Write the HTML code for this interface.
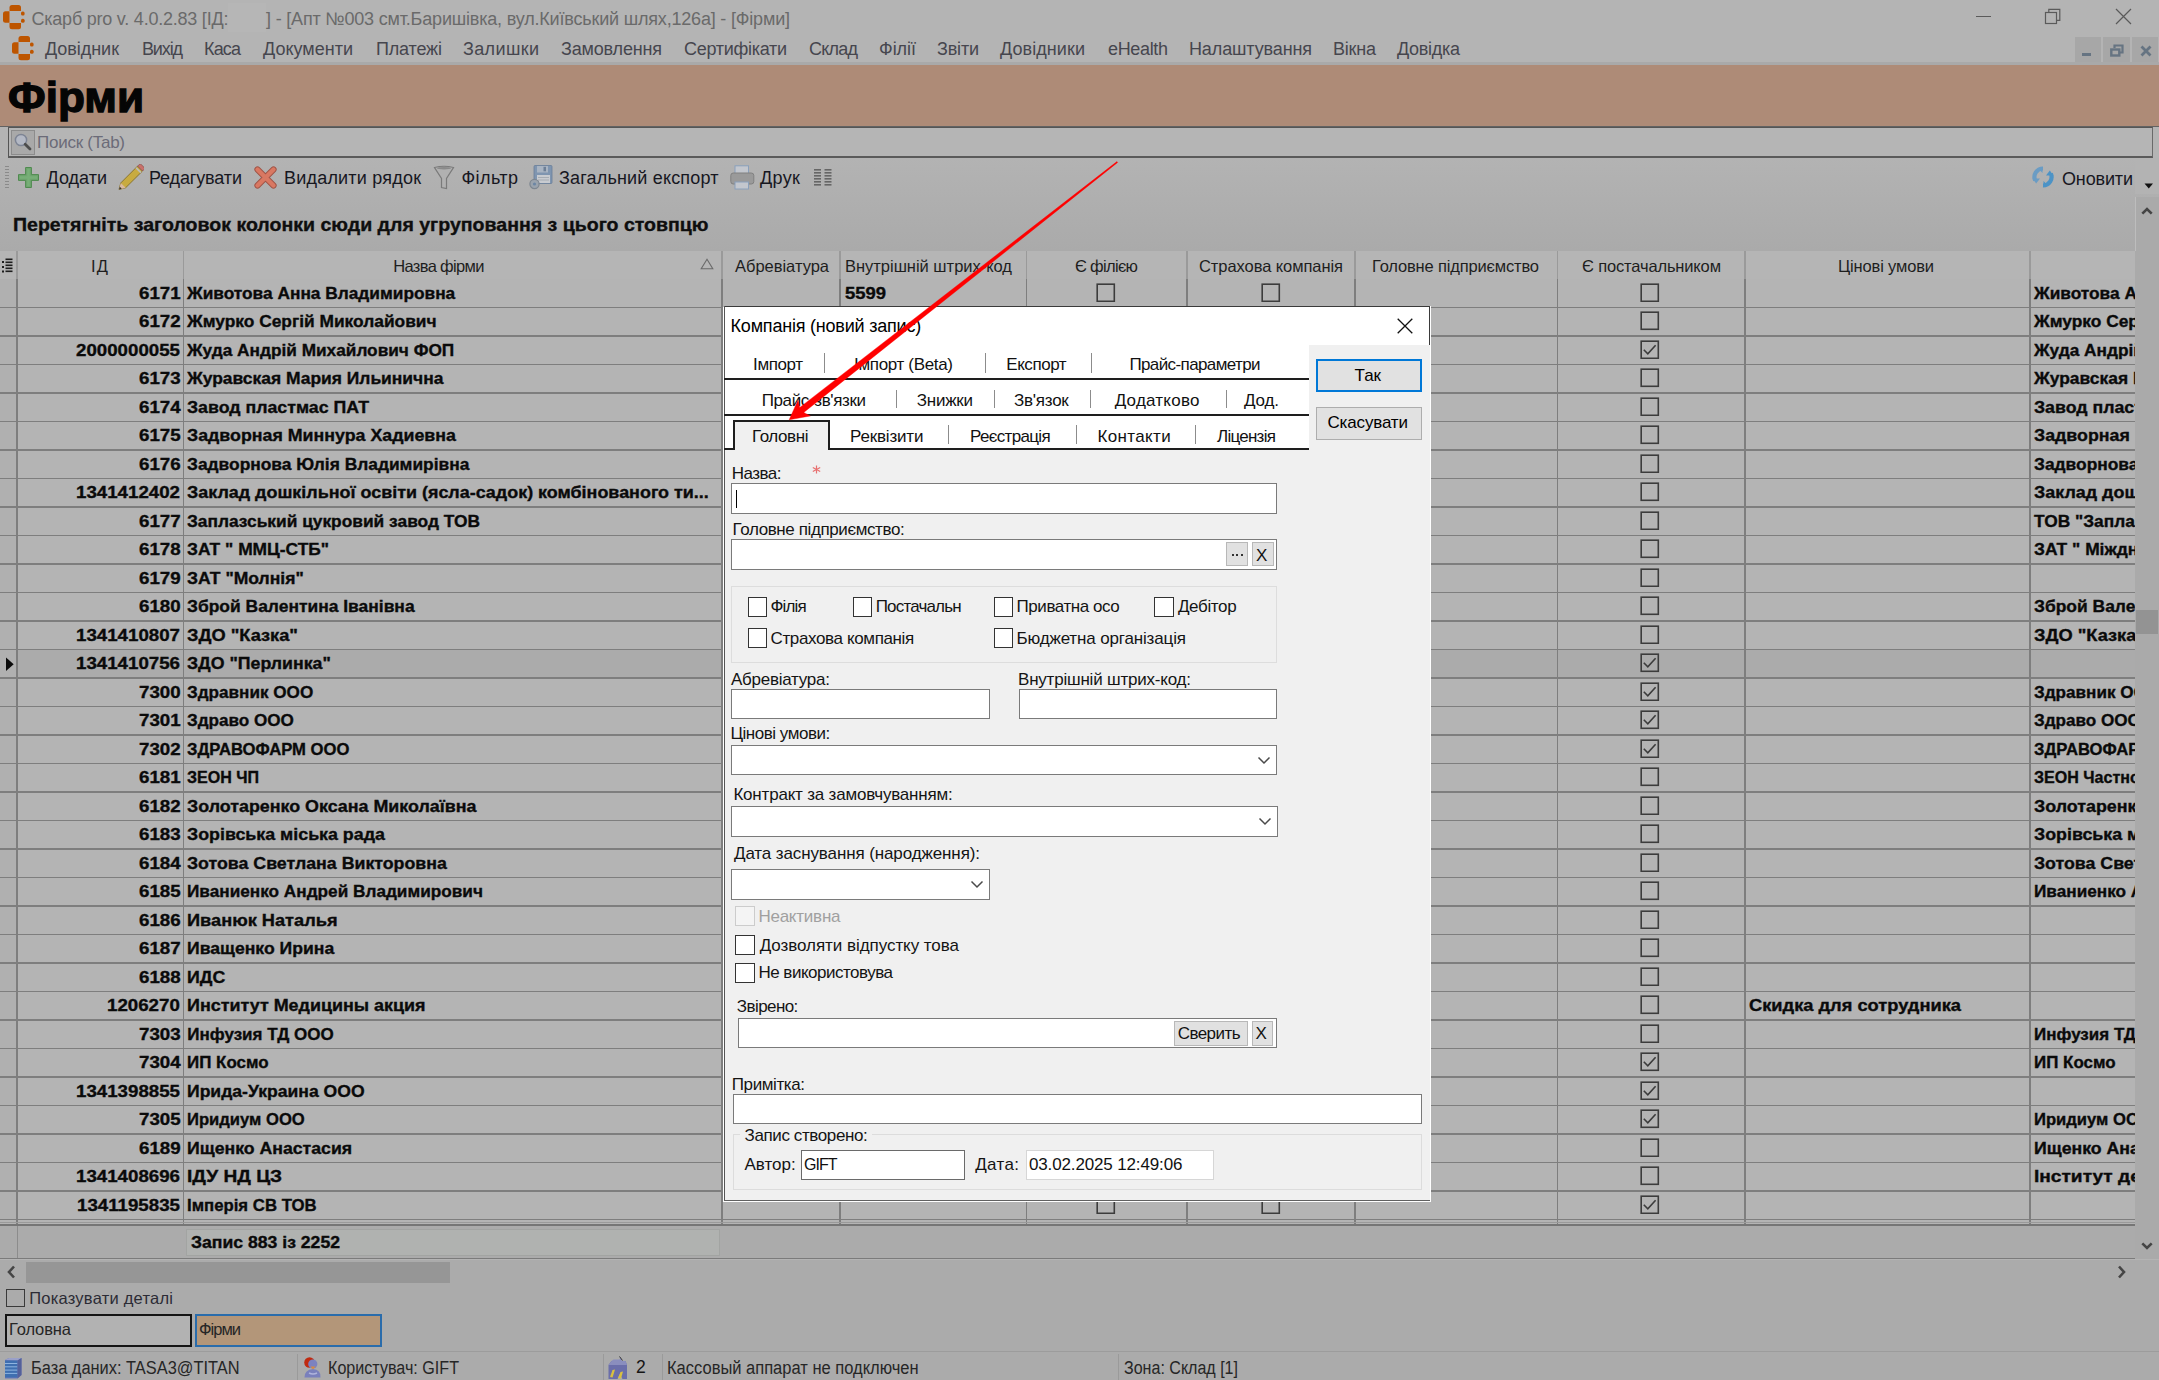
<!DOCTYPE html>
<html><head><meta charset="utf-8"><style>
html,body{margin:0;padding:0;width:2159px;height:1380px;overflow:hidden;background:#b4b4b4}
body{position:relative;font-family:"Liberation Sans",sans-serif}
.r{position:absolute}
.t{position:absolute;white-space:pre;transform-origin:0 0}
</style></head><body>
<div class="r" style="left:0.00px;top:0.00px;width:2159.00px;height:1380.00px;background:#b4b4b4"></div>
<svg class="r" style="left:3.00px;top:4.80px;" width="22" height="25" viewBox="0 0 22 25"><g fill="#bd5500"><path d="M9 0h6.5Q18 0 18 2.5V6H6.5V2.5Q6.5 0 9 0z"/><path d="M2.5 6.2H6.5v11.5H2.5Q0 17.7 0 15.2V8.7Q0 6.2 2.5 6.2z"/><path d="M6.5 18h11.5v3.7Q18 24.2 15.5 24.2H9Q6.5 24.2 6.5 21.7z"/><rect x="18" y="6.4" width="3.6" height="4.1" rx="1.6"/><rect x="18" y="13.7" width="3.6" height="4.1" rx="1.6"/></g></svg>
<div class="r" style="left:228.00px;top:3.00px;width:38.00px;height:29.00px;background:#b6b6b6"></div>
<div class="t" style="left:31.50px;top:9.76px;font-size:18px;line-height:18px;color:#6a6a6a;letter-spacing:-0.226px;">Скарб pro v. 4.0.2.83 [ІД:</div>
<div class="t" style="left:266.00px;top:9.76px;font-size:18px;line-height:18px;color:#6a6a6a;letter-spacing:-0.186px;">] - [Апт №003 смт.Баришівка, вул.Київський шлях,126а] - [Фірми]</div>
<div class="r" style="left:1976.00px;top:16.00px;width:15.00px;height:1.20px;background:#5a5a5a"></div>
<svg class="r" style="left:2044.00px;top:8.00px;" width="18" height="18" viewBox="0 0 18 18"><rect x="1.5" y="4.5" width="11" height="11" fill="none" stroke="#5a5a5a" stroke-width="1.2"/><path d="M4.8 4.5V1.3h11v11h-3.2" fill="none" stroke="#5a5a5a" stroke-width="1.2"/></svg>
<svg class="r" style="left:2115.00px;top:8.00px;" width="17" height="17" viewBox="0 0 17 17"><path d="M1 1L16 16M16 1L1 16" stroke="#5a5a5a" stroke-width="1.2"/></svg>
<svg class="r" style="left:11.70px;top:36.40px;" width="22" height="25" viewBox="0 0 22 25"><g fill="#bd5500"><path d="M9 0h6.5Q18 0 18 2.5V6H6.5V2.5Q6.5 0 9 0z"/><path d="M2.5 6.2H6.5v11.5H2.5Q0 17.7 0 15.2V8.7Q0 6.2 2.5 6.2z"/><path d="M6.5 18h11.5v3.7Q18 24.2 15.5 24.2H9Q6.5 24.2 6.5 21.7z"/><rect x="18" y="6.4" width="3.6" height="4.1" rx="1.6"/><rect x="18" y="13.7" width="3.6" height="4.1" rx="1.6"/></g></svg>
<div class="t" style="left:45.00px;top:40.26px;font-size:18px;line-height:18px;color:#46464e;letter-spacing:-0.048px;">Довідник</div>
<div class="t" style="left:142.00px;top:40.26px;font-size:18px;line-height:18px;color:#46464e;letter-spacing:-1.141px;">Вихід</div>
<div class="t" style="left:204.00px;top:40.26px;font-size:18px;line-height:18px;color:#46464e;letter-spacing:-0.836px;">Каса</div>
<div class="t" style="left:263.00px;top:40.26px;font-size:18px;line-height:18px;color:#46464e;letter-spacing:0.012px;">Документи</div>
<div class="t" style="left:376.00px;top:40.26px;font-size:18px;line-height:18px;color:#46464e;letter-spacing:-0.158px;">Платежі</div>
<div class="t" style="left:463.00px;top:40.26px;font-size:18px;line-height:18px;color:#46464e;letter-spacing:0.365px;">Залишки</div>
<div class="t" style="left:561.00px;top:40.26px;font-size:18px;line-height:18px;color:#46464e;letter-spacing:-0.173px;">Замовлення</div>
<div class="t" style="left:684.00px;top:40.26px;font-size:18px;line-height:18px;color:#46464e;letter-spacing:-0.292px;">Сертифікати</div>
<div class="t" style="left:809.00px;top:40.26px;font-size:18px;line-height:18px;color:#46464e;letter-spacing:-0.773px;">Склад</div>
<div class="t" style="left:879.00px;top:40.26px;font-size:18px;line-height:18px;color:#46464e;letter-spacing:-0.046px;">Філії</div>
<div class="t" style="left:937.00px;top:40.26px;font-size:18px;line-height:18px;color:#46464e;letter-spacing:-0.183px;">Звіти</div>
<div class="t" style="left:1000.00px;top:40.26px;font-size:18px;line-height:18px;color:#46464e;letter-spacing:0.076px;">Довідники</div>
<div class="t" style="left:1108.00px;top:40.26px;font-size:18px;line-height:18px;color:#46464e;letter-spacing:-0.340px;">eHealth</div>
<div class="t" style="left:1189.00px;top:40.26px;font-size:18px;line-height:18px;color:#46464e;letter-spacing:-0.128px;">Налаштування</div>
<div class="t" style="left:1333.00px;top:40.26px;font-size:18px;line-height:18px;color:#46464e;letter-spacing:-0.208px;">Вікна</div>
<div class="t" style="left:1397.00px;top:40.26px;font-size:18px;line-height:18px;color:#46464e;letter-spacing:-0.291px;">Довідка</div>
<div class="r" style="left:2074.60px;top:36.70px;width:26.40px;height:26.70px;background:#a7a7a7"></div>
<div class="r" style="left:2103.00px;top:36.70px;width:27.00px;height:26.70px;background:#a7a7a7"></div>
<div class="r" style="left:2132.00px;top:36.70px;width:26.00px;height:26.70px;background:#a7a7a7"></div>
<div class="r" style="left:2082.00px;top:52.70px;width:9.00px;height:3.20px;background:#667482"></div>
<svg class="r" style="left:2110.00px;top:43.50px;" width="14" height="14" viewBox="0 0 14 14"><rect x="1.3" y="5.5" width="8" height="6" fill="none" stroke="#667482" stroke-width="2.4"/><path d="M4.5 4V1.5h8v7h-2.5" fill="none" stroke="#667482" stroke-width="2.2"/></svg>
<svg class="r" style="left:2139.50px;top:45.00px;" width="12" height="12" viewBox="0 0 12 12"><path d="M1.5 1.5L10.5 10.5M10.5 1.5L1.5 10.5" stroke="#667482" stroke-width="2.8"/></svg>
<div class="r" style="left:0.00px;top:61.80px;width:2159.00px;height:2.80px;background:#a9a9a9"></div>
<div class="r" style="left:0.00px;top:64.50px;width:2159.00px;height:62.00px;background:#ae8b77"></div>
<div class="r" style="left:0.00px;top:125.80px;width:2159.00px;height:1.60px;background:#626262"></div>
<div class="t" style="left:8.30px;top:76.40px;font-size:43px;line-height:43px;color:#050505;font-weight:bold;-webkit-text-stroke:0.35px #050505;transform:scaleX(1.0265);-webkit-text-stroke:1.3px #050505;">Фірми</div>
<div class="r" style="left:7.50px;top:127.40px;width:2145.00px;height:30.60px;background:#b5b5b5;border-style:solid;border-width:1.5px 1.5px 2px 1.5px;border-color:#555 #6a6a6a #5a5a5a #555;box-sizing:border-box"></div>
<div class="r" style="left:11.00px;top:130.00px;width:23.50px;height:24.50px;background:#a9a9a9;border:1px solid #8c8c8c;box-sizing:border-box"></div>
<svg class="r" style="left:13.00px;top:132.00px;" width="20" height="20" viewBox="0 0 20 20"><circle cx="8" cy="8" r="5.6" fill="#b3b8c4" stroke="#7d8494" stroke-width="1.5"/><path d="M12.2 12.2L17 17" stroke="#4d4d4d" stroke-width="2.8" stroke-linecap="round"/></svg>
<div class="t" style="left:37.00px;top:134.11px;font-size:17px;line-height:17px;color:#6b6b78;letter-spacing:-0.256px;">Поиск (Tab)</div>
<div class="r" style="left:0.00px;top:158.00px;width:2159.00px;height:93.00px;background:linear-gradient(#b3b3b3,#aaaaaa)"></div>
<div class="r" style="left:4.80px;top:165.50px;width:4.20px;height:1.30px;background:#8a8a8a"></div>
<div class="r" style="left:4.80px;top:168.50px;width:4.20px;height:1.30px;background:#8a8a8a"></div>
<div class="r" style="left:4.80px;top:171.50px;width:4.20px;height:1.30px;background:#8a8a8a"></div>
<div class="r" style="left:4.80px;top:174.50px;width:4.20px;height:1.30px;background:#8a8a8a"></div>
<div class="r" style="left:4.80px;top:177.50px;width:4.20px;height:1.30px;background:#8a8a8a"></div>
<div class="r" style="left:4.80px;top:180.50px;width:4.20px;height:1.30px;background:#8a8a8a"></div>
<div class="r" style="left:4.80px;top:183.50px;width:4.20px;height:1.30px;background:#8a8a8a"></div>
<div class="r" style="left:4.80px;top:186.50px;width:4.20px;height:1.30px;background:#8a8a8a"></div>
<svg class="r" style="left:18.00px;top:167.00px;" width="21" height="21" viewBox="0 0 21 21"><path d="M7.6 0.5h5.8v7.1h7.1v5.8h-7.1v7.1H7.6v-7.1H0.5V7.6h7.1z" fill="#6fa56f" stroke="#4f8a4f" stroke-width="1"/><path d="M9.3 2h2.4v7.3H19v2.4h-7.3V19H9.3v-7.3H2V9.3h7.3z" fill="#7db57d" opacity="0.6"/></svg>
<div class="t" style="left:46.50px;top:169.46px;font-size:18px;line-height:18px;color:#17171f;letter-spacing:0.015px;">Додати</div>
<svg class="r" style="left:117.00px;top:164.00px;" width="27" height="27" viewBox="0 0 27 27"><path d="M2 25.5l1.8-6.6L20.6 2.1l4.9 4.9L8.7 23.7z" fill="#c8ab40" stroke="#8a7530" stroke-width="1"/><path d="M20.6 2.1l1.6-1.6q1-1 2 0l2.9 2.9q1 1 0 2l-1.6 1.6z" fill="#c9706a" stroke="#8a5550" stroke-width="0.8"/><path d="M19 3.7l4.9 4.9" stroke="#bdbdbd" stroke-width="1.6"/><path d="M2 25.5l1.8-6.6 4.9 4.8z" fill="#d8b8a0"/><path d="M2 25.5l0.8-2.8 2 2z" fill="#333"/></svg>
<div class="t" style="left:149.00px;top:169.26px;font-size:18px;line-height:18px;color:#17171f;letter-spacing:-0.132px;">Редагувати</div>
<svg class="r" style="left:254.00px;top:166.00px;" width="23" height="23" viewBox="0 0 23 23"><path d="M3.5 3.5L19.5 19.5M19.5 3.5L3.5 19.5" stroke="#9f5346" stroke-width="6.2" stroke-linecap="round"/><path d="M3.5 3.5L19.5 19.5M19.5 3.5L3.5 19.5" stroke="#d97862" stroke-width="4.4" stroke-linecap="round"/></svg>
<div class="t" style="left:284.00px;top:169.26px;font-size:18px;line-height:18px;color:#17171f;letter-spacing:0.202px;">Видалити рядок</div>
<svg class="r" style="left:433.00px;top:165.00px;" width="22" height="25" viewBox="0 0 22 25"><path d="M1.5 2.5Q11 0 20.5 2.5L13.5 13.5V23.5L8.5 22.5V13.5Z" fill="#b1b1b1" stroke="#7a7a7a" stroke-width="1.2"/><ellipse cx="11" cy="3.2" rx="7" ry="1.3" fill="#8a8a8a"/></svg>
<div class="t" style="left:461.50px;top:169.26px;font-size:18px;line-height:18px;color:#17171f;letter-spacing:0.417px;">Фільтр</div>
<svg class="r" style="left:528.00px;top:164.00px;" width="26" height="27" viewBox="0 0 26 27"><rect x="6" y="1.5" width="18" height="18" rx="1" fill="#7f95b0" stroke="#6a7f99" stroke-width="0.8"/><rect x="9" y="2" width="11" height="6.5" fill="#a9b4c2"/><rect x="15.5" y="2.8" width="2.5" height="4.5" fill="#6d7f96"/><rect x="9" y="11" width="13" height="8" fill="#c8cbd0"/><path d="M10 13.5h11M10 16h11" stroke="#9da3ab" stroke-width="0.8"/><circle cx="6.5" cy="20" r="4.6" fill="#9aa3ad" stroke="#7d8690" stroke-width="1.2"/><circle cx="6.5" cy="20" r="1.6" fill="#6c86a4"/></svg>
<div class="t" style="left:559.00px;top:169.26px;font-size:18px;line-height:18px;color:#17171f;letter-spacing:0.175px;">Загальний експорт</div>
<svg class="r" style="left:730.00px;top:165.00px;" width="25" height="25" viewBox="0 0 25 25"><rect x="5" y="0.8" width="13.5" height="9" fill="#c3c7ce" stroke="#8aa0bb" stroke-width="1"/><rect x="0.8" y="8" width="23" height="11" rx="2.5" fill="#9a9a9a" stroke="#808080" stroke-width="1"/><rect x="5" y="17" width="13.5" height="7" fill="#c3c7ce" stroke="#8aa0bb" stroke-width="1"/></svg>
<div class="t" style="left:760.00px;top:169.26px;font-size:18px;line-height:18px;color:#17171f;letter-spacing:0.375px;">Друк</div>
<svg class="r" style="left:814.00px;top:169.00px;" width="19" height="17" viewBox="0 0 19 17"><g fill="#666"><rect x="0" y="0" width="7" height="1.6"/><rect x="0" y="3" width="7" height="1.6"/><rect x="0" y="6" width="7" height="1.6"/><rect x="0" y="9" width="7" height="1.6"/><rect x="0" y="12" width="7" height="1.6"/><rect x="0" y="15" width="7" height="1.6"/><rect x="10.5" y="0" width="7" height="1.6"/><rect x="10.5" y="3" width="7" height="1.6"/><rect x="10.5" y="6" width="7" height="1.6"/><rect x="10.5" y="9" width="7" height="1.6"/><rect x="10.5" y="12" width="7" height="1.6"/><rect x="10.5" y="15" width="7" height="1.6"/></g></svg>
<svg class="r" style="left:2032.00px;top:166.00px;" width="22" height="22" viewBox="0 0 22 22"><path d="M11 2.5A8.5 8.5 0 0 0 3.2 14.5" fill="none" stroke="#6a9cc4" stroke-width="4.2"/><path d="M0.5 12.5h7.5l-3.8 5z" fill="#6a9cc4"/><path d="M11 19.5A8.5 8.5 0 0 0 18.8 7.5" fill="none" stroke="#4c93c6" stroke-width="4.2"/><path d="M21.5 9.5h-7.5l3.8-5z" fill="#4c93c6"/><path d="M10.5 1v6l-3-3z" fill="#6a9cc4"/><path d="M11.5 21v-6l3 3z" fill="#4c93c6"/></svg>
<div class="t" style="left:2062.00px;top:169.56px;font-size:18px;line-height:18px;color:#17171f;letter-spacing:-0.145px;">Оновити</div>
<svg class="r" style="left:2144.00px;top:182.50px;" width="9.5" height="6" viewBox="0 0 9.5 6"><path d="M0.5 0.5h8.5L4.75 5.5z" fill="#111"/></svg>
<div class="t" style="left:12.50px;top:215.64px;font-size:18.5px;line-height:18.5px;color:#0e0e0e;font-weight:bold;-webkit-text-stroke:0.35px #0e0e0e;transform:scaleX(1.0560);">Перетягніть заголовок колонки сюди для угруповання з цього стовпцю</div>
<div class="r" style="left:0.00px;top:251.00px;width:2135.00px;height:28.00px;background:#b5b5b5"></div>
<div class="r" style="left:16.40px;top:251.00px;width:1.20px;height:28.00px;background:#9a9a9a"></div>
<div class="r" style="left:182.90px;top:251.00px;width:1.20px;height:28.00px;background:#9a9a9a"></div>
<div class="r" style="left:721.40px;top:251.00px;width:1.20px;height:28.00px;background:#9a9a9a"></div>
<div class="r" style="left:839.40px;top:251.00px;width:1.20px;height:28.00px;background:#9a9a9a"></div>
<div class="r" style="left:1025.90px;top:251.00px;width:1.20px;height:28.00px;background:#9a9a9a"></div>
<div class="r" style="left:1186.40px;top:251.00px;width:1.20px;height:28.00px;background:#9a9a9a"></div>
<div class="r" style="left:1354.40px;top:251.00px;width:1.20px;height:28.00px;background:#9a9a9a"></div>
<div class="r" style="left:1556.90px;top:251.00px;width:1.20px;height:28.00px;background:#9a9a9a"></div>
<div class="r" style="left:1744.40px;top:251.00px;width:1.20px;height:28.00px;background:#9a9a9a"></div>
<div class="r" style="left:2029.40px;top:251.00px;width:1.20px;height:28.00px;background:#9a9a9a"></div>
<svg class="r" style="left:1.50px;top:258.00px;" width="12" height="15" viewBox="0 0 12 15"><g fill="#1e1e1e"><rect x="0" y="3" width="2" height="2"/><rect x="0" y="8" width="2" height="2"/><rect x="0" y="12.5" width="2" height="2"/><rect x="3.5" y="0.5" width="7" height="1.6"/><rect x="3.5" y="3.5" width="7" height="1.6"/><rect x="3.5" y="6.5" width="7" height="1.6"/><rect x="3.5" y="9.5" width="7" height="1.6"/><rect x="3.5" y="12.5" width="7" height="1.6"/></g></svg>
<div class="t" style="left:91.00px;top:257.73px;font-size:16.5px;line-height:16.5px;color:#1e1e1e;letter-spacing:1.241px;">ІД</div>
<div class="t" style="left:393.30px;top:257.73px;font-size:16.5px;line-height:16.5px;color:#1e1e1e;letter-spacing:-0.669px;">Назва фірми</div>
<div class="t" style="left:735.00px;top:257.73px;font-size:16.5px;line-height:16.5px;color:#1e1e1e;letter-spacing:-0.021px;">Абревіатура</div>
<div class="t" style="left:845.00px;top:257.73px;font-size:16.5px;line-height:16.5px;color:#1e1e1e;letter-spacing:-0.019px;">Внутрішній штрих-код</div>
<div class="t" style="left:1075.00px;top:257.73px;font-size:16.5px;line-height:16.5px;color:#1e1e1e;letter-spacing:-0.682px;">Є філією</div>
<div class="t" style="left:1199.00px;top:257.73px;font-size:16.5px;line-height:16.5px;color:#1e1e1e;letter-spacing:-0.072px;">Страхова компанія</div>
<div class="t" style="left:1372.00px;top:257.73px;font-size:16.5px;line-height:16.5px;color:#1e1e1e;letter-spacing:-0.166px;">Головне підприємство</div>
<div class="t" style="left:1582.00px;top:257.73px;font-size:16.5px;line-height:16.5px;color:#1e1e1e;letter-spacing:-0.150px;">Є постачальником</div>
<div class="t" style="left:1838.00px;top:257.73px;font-size:16.5px;line-height:16.5px;color:#1e1e1e;letter-spacing:-0.159px;">Цінові умови</div>
<svg class="r" style="left:700.00px;top:258.00px;" width="14" height="12" viewBox="0 0 14 12"><path d="M7 1.2L12.8 10.8H1.2z" fill="none" stroke="#6a6a6a" stroke-width="1.1"/></svg>
<div class="r" style="left:0.00px;top:279.00px;width:2135.00px;height:943.50px;background:#b4b4b4"></div>
<div class="r" style="left:0.00px;top:279.00px;width:16.50px;height:943.50px;background:#b0b0b0"></div>
<div class="r" style="left:17.00px;top:649.50px;width:2118.00px;height:28.50px;background:#ababab"></div>
<div class="r" style="left:0.00px;top:306.85px;width:2135.00px;height:1.30px;background:#7e7e7e"></div>
<div class="r" style="left:0.00px;top:335.35px;width:2135.00px;height:1.30px;background:#7e7e7e"></div>
<div class="r" style="left:0.00px;top:363.85px;width:2135.00px;height:1.30px;background:#7e7e7e"></div>
<div class="r" style="left:0.00px;top:392.35px;width:2135.00px;height:1.30px;background:#7e7e7e"></div>
<div class="r" style="left:0.00px;top:420.85px;width:2135.00px;height:1.30px;background:#7e7e7e"></div>
<div class="r" style="left:0.00px;top:449.35px;width:2135.00px;height:1.30px;background:#7e7e7e"></div>
<div class="r" style="left:0.00px;top:477.85px;width:2135.00px;height:1.30px;background:#7e7e7e"></div>
<div class="r" style="left:0.00px;top:506.35px;width:2135.00px;height:1.30px;background:#7e7e7e"></div>
<div class="r" style="left:0.00px;top:534.85px;width:2135.00px;height:1.30px;background:#7e7e7e"></div>
<div class="r" style="left:0.00px;top:563.35px;width:2135.00px;height:1.30px;background:#7e7e7e"></div>
<div class="r" style="left:0.00px;top:591.85px;width:2135.00px;height:1.30px;background:#7e7e7e"></div>
<div class="r" style="left:0.00px;top:620.35px;width:2135.00px;height:1.30px;background:#7e7e7e"></div>
<div class="r" style="left:0.00px;top:648.85px;width:2135.00px;height:1.30px;background:#7e7e7e"></div>
<div class="r" style="left:0.00px;top:677.35px;width:2135.00px;height:1.30px;background:#7e7e7e"></div>
<div class="r" style="left:0.00px;top:705.85px;width:2135.00px;height:1.30px;background:#7e7e7e"></div>
<div class="r" style="left:0.00px;top:734.35px;width:2135.00px;height:1.30px;background:#7e7e7e"></div>
<div class="r" style="left:0.00px;top:762.85px;width:2135.00px;height:1.30px;background:#7e7e7e"></div>
<div class="r" style="left:0.00px;top:791.35px;width:2135.00px;height:1.30px;background:#7e7e7e"></div>
<div class="r" style="left:0.00px;top:819.85px;width:2135.00px;height:1.30px;background:#7e7e7e"></div>
<div class="r" style="left:0.00px;top:848.35px;width:2135.00px;height:1.30px;background:#7e7e7e"></div>
<div class="r" style="left:0.00px;top:876.85px;width:2135.00px;height:1.30px;background:#7e7e7e"></div>
<div class="r" style="left:0.00px;top:905.35px;width:2135.00px;height:1.30px;background:#7e7e7e"></div>
<div class="r" style="left:0.00px;top:933.85px;width:2135.00px;height:1.30px;background:#7e7e7e"></div>
<div class="r" style="left:0.00px;top:962.35px;width:2135.00px;height:1.30px;background:#7e7e7e"></div>
<div class="r" style="left:0.00px;top:990.85px;width:2135.00px;height:1.30px;background:#7e7e7e"></div>
<div class="r" style="left:0.00px;top:1019.35px;width:2135.00px;height:1.30px;background:#7e7e7e"></div>
<div class="r" style="left:0.00px;top:1047.85px;width:2135.00px;height:1.30px;background:#7e7e7e"></div>
<div class="r" style="left:0.00px;top:1076.35px;width:2135.00px;height:1.30px;background:#7e7e7e"></div>
<div class="r" style="left:0.00px;top:1104.85px;width:2135.00px;height:1.30px;background:#7e7e7e"></div>
<div class="r" style="left:0.00px;top:1133.35px;width:2135.00px;height:1.30px;background:#7e7e7e"></div>
<div class="r" style="left:0.00px;top:1161.85px;width:2135.00px;height:1.30px;background:#7e7e7e"></div>
<div class="r" style="left:0.00px;top:1190.35px;width:2135.00px;height:1.30px;background:#7e7e7e"></div>
<div class="r" style="left:0.00px;top:1218.85px;width:2135.00px;height:1.30px;background:#7e7e7e"></div>
<div class="r" style="left:16.35px;top:279.00px;width:1.30px;height:943.50px;background:#7e7e7e"></div>
<div class="r" style="left:182.85px;top:279.00px;width:1.30px;height:943.50px;background:#7e7e7e"></div>
<div class="r" style="left:721.35px;top:279.00px;width:1.30px;height:943.50px;background:#7e7e7e"></div>
<div class="r" style="left:839.35px;top:279.00px;width:1.30px;height:943.50px;background:#7e7e7e"></div>
<div class="r" style="left:1025.85px;top:279.00px;width:1.30px;height:943.50px;background:#7e7e7e"></div>
<div class="r" style="left:1186.35px;top:279.00px;width:1.30px;height:943.50px;background:#7e7e7e"></div>
<div class="r" style="left:1354.35px;top:279.00px;width:1.30px;height:943.50px;background:#7e7e7e"></div>
<div class="r" style="left:1556.85px;top:279.00px;width:1.30px;height:943.50px;background:#7e7e7e"></div>
<div class="r" style="left:1744.35px;top:279.00px;width:1.30px;height:943.50px;background:#7e7e7e"></div>
<div class="r" style="left:2029.35px;top:279.00px;width:1.30px;height:943.50px;background:#7e7e7e"></div>
<svg class="r" style="left:5.00px;top:656.00px;" width="10" height="16" viewBox="0 0 10 16"><path d="M1 1.5l7.7 6.8L1 15z" fill="#0a0a0a"/></svg>
<div class="t" style="left:138.60px;top:284.61px;font-size:17px;line-height:17px;color:#0a0a0a;font-weight:bold;-webkit-text-stroke:0.35px #0a0a0a;transform:scaleX(1.1000);">6171</div>
<div class="t" style="left:187.30px;top:284.61px;font-size:17px;line-height:17px;color:#0a0a0a;font-weight:bold;-webkit-text-stroke:0.35px #0a0a0a;transform:scaleX(1.0174);">Животова Анна Владимировна</div>
<svg class="r" style="left:1096.25px;top:282.55px;" width="19.5" height="19.5" viewBox="0 0 19.5 19.5"><rect x="1.2" y="1.2" width="17.1" height="17.1" fill="none" stroke="#3c3c3c" stroke-width="1.6"/></svg>
<svg class="r" style="left:1261.25px;top:282.55px;" width="19.5" height="19.5" viewBox="0 0 19.5 19.5"><rect x="1.2" y="1.2" width="17.1" height="17.1" fill="none" stroke="#3c3c3c" stroke-width="1.6"/></svg>
<svg class="r" style="left:1640.25px;top:282.55px;" width="19.5" height="19.5" viewBox="0 0 19.5 19.5"><rect x="1.2" y="1.2" width="17.1" height="17.1" fill="none" stroke="#3c3c3c" stroke-width="1.6"/></svg>
<div class="t" style="left:2034.00px;top:284.61px;font-size:17px;line-height:17px;color:#0a0a0a;font-weight:bold;-webkit-text-stroke:0.35px #0a0a0a;transform:scaleX(1.0174);">Животова Анна</div>
<div class="t" style="left:845.00px;top:284.61px;font-size:17px;line-height:17px;color:#0a0a0a;font-weight:bold;-webkit-text-stroke:0.35px #0a0a0a;transform:scaleX(1.0841);">5599</div>
<div class="t" style="left:138.60px;top:313.11px;font-size:17px;line-height:17px;color:#0a0a0a;font-weight:bold;-webkit-text-stroke:0.35px #0a0a0a;transform:scaleX(1.1000);">6172</div>
<div class="t" style="left:187.30px;top:313.11px;font-size:17px;line-height:17px;color:#0a0a0a;font-weight:bold;-webkit-text-stroke:0.35px #0a0a0a;transform:scaleX(1.0207);">Жмурко Сергій Миколайович</div>
<svg class="r" style="left:1096.25px;top:311.05px;" width="19.5" height="19.5" viewBox="0 0 19.5 19.5"><rect x="1.2" y="1.2" width="17.1" height="17.1" fill="none" stroke="#3c3c3c" stroke-width="1.6"/></svg>
<svg class="r" style="left:1261.25px;top:311.05px;" width="19.5" height="19.5" viewBox="0 0 19.5 19.5"><rect x="1.2" y="1.2" width="17.1" height="17.1" fill="none" stroke="#3c3c3c" stroke-width="1.6"/></svg>
<svg class="r" style="left:1640.25px;top:311.05px;" width="19.5" height="19.5" viewBox="0 0 19.5 19.5"><rect x="1.2" y="1.2" width="17.1" height="17.1" fill="none" stroke="#3c3c3c" stroke-width="1.6"/></svg>
<div class="t" style="left:2034.00px;top:313.11px;font-size:17px;line-height:17px;color:#0a0a0a;font-weight:bold;-webkit-text-stroke:0.35px #0a0a0a;transform:scaleX(1.0207);">Жмурко Сергій</div>
<div class="t" style="left:76.20px;top:341.61px;font-size:17px;line-height:17px;color:#0a0a0a;font-weight:bold;-webkit-text-stroke:0.35px #0a0a0a;transform:scaleX(1.1000);">2000000055</div>
<div class="t" style="left:187.30px;top:341.61px;font-size:17px;line-height:17px;color:#0a0a0a;font-weight:bold;-webkit-text-stroke:0.35px #0a0a0a;transform:scaleX(1.0146);">Жуда Андрій Михайлович ФОП</div>
<svg class="r" style="left:1096.25px;top:339.55px;" width="19.5" height="19.5" viewBox="0 0 19.5 19.5"><rect x="1.2" y="1.2" width="17.1" height="17.1" fill="none" stroke="#3c3c3c" stroke-width="1.6"/></svg>
<svg class="r" style="left:1261.25px;top:339.55px;" width="19.5" height="19.5" viewBox="0 0 19.5 19.5"><rect x="1.2" y="1.2" width="17.1" height="17.1" fill="none" stroke="#3c3c3c" stroke-width="1.6"/></svg>
<svg class="r" style="left:1640.25px;top:339.55px;" width="19.5" height="19.5" viewBox="0 0 19.5 19.5"><rect x="1.2" y="1.2" width="17.1" height="17.1" fill="none" stroke="#3c3c3c" stroke-width="1.6"/><path d="M3.8 9.8l4 4 7.8-8.6" fill="none" stroke="#3c3c3c" stroke-width="1.6"/></svg>
<div class="t" style="left:2034.00px;top:341.61px;font-size:17px;line-height:17px;color:#0a0a0a;font-weight:bold;-webkit-text-stroke:0.35px #0a0a0a;transform:scaleX(1.0146);">Жуда Андрій</div>
<div class="t" style="left:138.60px;top:370.11px;font-size:17px;line-height:17px;color:#0a0a0a;font-weight:bold;-webkit-text-stroke:0.35px #0a0a0a;transform:scaleX(1.1000);">6173</div>
<div class="t" style="left:187.30px;top:370.11px;font-size:17px;line-height:17px;color:#0a0a0a;font-weight:bold;-webkit-text-stroke:0.35px #0a0a0a;transform:scaleX(1.0254);">Журавская Мария Ильинична</div>
<svg class="r" style="left:1096.25px;top:368.05px;" width="19.5" height="19.5" viewBox="0 0 19.5 19.5"><rect x="1.2" y="1.2" width="17.1" height="17.1" fill="none" stroke="#3c3c3c" stroke-width="1.6"/></svg>
<svg class="r" style="left:1261.25px;top:368.05px;" width="19.5" height="19.5" viewBox="0 0 19.5 19.5"><rect x="1.2" y="1.2" width="17.1" height="17.1" fill="none" stroke="#3c3c3c" stroke-width="1.6"/></svg>
<svg class="r" style="left:1640.25px;top:368.05px;" width="19.5" height="19.5" viewBox="0 0 19.5 19.5"><rect x="1.2" y="1.2" width="17.1" height="17.1" fill="none" stroke="#3c3c3c" stroke-width="1.6"/></svg>
<div class="t" style="left:2034.00px;top:370.11px;font-size:17px;line-height:17px;color:#0a0a0a;font-weight:bold;-webkit-text-stroke:0.35px #0a0a0a;transform:scaleX(1.0254);">Журавская Мария</div>
<div class="t" style="left:138.60px;top:398.61px;font-size:17px;line-height:17px;color:#0a0a0a;font-weight:bold;-webkit-text-stroke:0.35px #0a0a0a;transform:scaleX(1.1000);">6174</div>
<div class="t" style="left:187.30px;top:398.61px;font-size:17px;line-height:17px;color:#0a0a0a;font-weight:bold;-webkit-text-stroke:0.35px #0a0a0a;transform:scaleX(1.0440);">Завод пластмас ПАТ</div>
<svg class="r" style="left:1096.25px;top:396.55px;" width="19.5" height="19.5" viewBox="0 0 19.5 19.5"><rect x="1.2" y="1.2" width="17.1" height="17.1" fill="none" stroke="#3c3c3c" stroke-width="1.6"/></svg>
<svg class="r" style="left:1261.25px;top:396.55px;" width="19.5" height="19.5" viewBox="0 0 19.5 19.5"><rect x="1.2" y="1.2" width="17.1" height="17.1" fill="none" stroke="#3c3c3c" stroke-width="1.6"/></svg>
<svg class="r" style="left:1640.25px;top:396.55px;" width="19.5" height="19.5" viewBox="0 0 19.5 19.5"><rect x="1.2" y="1.2" width="17.1" height="17.1" fill="none" stroke="#3c3c3c" stroke-width="1.6"/></svg>
<div class="t" style="left:2034.00px;top:398.61px;font-size:17px;line-height:17px;color:#0a0a0a;font-weight:bold;-webkit-text-stroke:0.35px #0a0a0a;transform:scaleX(1.0440);">Завод пластмас</div>
<div class="t" style="left:138.60px;top:427.11px;font-size:17px;line-height:17px;color:#0a0a0a;font-weight:bold;-webkit-text-stroke:0.35px #0a0a0a;transform:scaleX(1.1000);">6175</div>
<div class="t" style="left:187.30px;top:427.11px;font-size:17px;line-height:17px;color:#0a0a0a;font-weight:bold;-webkit-text-stroke:0.35px #0a0a0a;transform:scaleX(1.0469);">Задворная Миннура Хадиевна</div>
<svg class="r" style="left:1096.25px;top:425.05px;" width="19.5" height="19.5" viewBox="0 0 19.5 19.5"><rect x="1.2" y="1.2" width="17.1" height="17.1" fill="none" stroke="#3c3c3c" stroke-width="1.6"/></svg>
<svg class="r" style="left:1261.25px;top:425.05px;" width="19.5" height="19.5" viewBox="0 0 19.5 19.5"><rect x="1.2" y="1.2" width="17.1" height="17.1" fill="none" stroke="#3c3c3c" stroke-width="1.6"/></svg>
<svg class="r" style="left:1640.25px;top:425.05px;" width="19.5" height="19.5" viewBox="0 0 19.5 19.5"><rect x="1.2" y="1.2" width="17.1" height="17.1" fill="none" stroke="#3c3c3c" stroke-width="1.6"/></svg>
<div class="t" style="left:2034.00px;top:427.11px;font-size:17px;line-height:17px;color:#0a0a0a;font-weight:bold;-webkit-text-stroke:0.35px #0a0a0a;transform:scaleX(1.0469);">Задворная Миннура</div>
<div class="t" style="left:138.60px;top:455.61px;font-size:17px;line-height:17px;color:#0a0a0a;font-weight:bold;-webkit-text-stroke:0.35px #0a0a0a;transform:scaleX(1.1000);">6176</div>
<div class="t" style="left:187.30px;top:455.61px;font-size:17px;line-height:17px;color:#0a0a0a;font-weight:bold;-webkit-text-stroke:0.35px #0a0a0a;transform:scaleX(1.0221);">Задворнова Юлія Владимирівна</div>
<svg class="r" style="left:1096.25px;top:453.55px;" width="19.5" height="19.5" viewBox="0 0 19.5 19.5"><rect x="1.2" y="1.2" width="17.1" height="17.1" fill="none" stroke="#3c3c3c" stroke-width="1.6"/></svg>
<svg class="r" style="left:1261.25px;top:453.55px;" width="19.5" height="19.5" viewBox="0 0 19.5 19.5"><rect x="1.2" y="1.2" width="17.1" height="17.1" fill="none" stroke="#3c3c3c" stroke-width="1.6"/></svg>
<svg class="r" style="left:1640.25px;top:453.55px;" width="19.5" height="19.5" viewBox="0 0 19.5 19.5"><rect x="1.2" y="1.2" width="17.1" height="17.1" fill="none" stroke="#3c3c3c" stroke-width="1.6"/></svg>
<div class="t" style="left:2034.00px;top:455.61px;font-size:17px;line-height:17px;color:#0a0a0a;font-weight:bold;-webkit-text-stroke:0.35px #0a0a0a;transform:scaleX(1.0221);">Задворнова Юлія</div>
<div class="t" style="left:76.20px;top:484.11px;font-size:17px;line-height:17px;color:#0a0a0a;font-weight:bold;-webkit-text-stroke:0.35px #0a0a0a;transform:scaleX(1.1000);">1341412402</div>
<div class="t" style="left:187.30px;top:484.11px;font-size:17px;line-height:17px;color:#0a0a0a;font-weight:bold;-webkit-text-stroke:0.35px #0a0a0a;transform:scaleX(1.0543);">Заклад дошкільної освіти (ясла-садок) комбінованого ти...</div>
<svg class="r" style="left:1096.25px;top:482.05px;" width="19.5" height="19.5" viewBox="0 0 19.5 19.5"><rect x="1.2" y="1.2" width="17.1" height="17.1" fill="none" stroke="#3c3c3c" stroke-width="1.6"/></svg>
<svg class="r" style="left:1261.25px;top:482.05px;" width="19.5" height="19.5" viewBox="0 0 19.5 19.5"><rect x="1.2" y="1.2" width="17.1" height="17.1" fill="none" stroke="#3c3c3c" stroke-width="1.6"/></svg>
<svg class="r" style="left:1640.25px;top:482.05px;" width="19.5" height="19.5" viewBox="0 0 19.5 19.5"><rect x="1.2" y="1.2" width="17.1" height="17.1" fill="none" stroke="#3c3c3c" stroke-width="1.6"/></svg>
<div class="t" style="left:2034.00px;top:484.11px;font-size:17px;line-height:17px;color:#0a0a0a;font-weight:bold;-webkit-text-stroke:0.35px #0a0a0a;transform:scaleX(1.0543);">Заклад дошкільної</div>
<div class="t" style="left:138.60px;top:512.61px;font-size:17px;line-height:17px;color:#0a0a0a;font-weight:bold;-webkit-text-stroke:0.35px #0a0a0a;transform:scaleX(1.1000);">6177</div>
<div class="t" style="left:187.30px;top:512.61px;font-size:17px;line-height:17px;color:#0a0a0a;font-weight:bold;-webkit-text-stroke:0.35px #0a0a0a;transform:scaleX(1.0199);">Заплазський цукровий завод ТОВ</div>
<svg class="r" style="left:1096.25px;top:510.55px;" width="19.5" height="19.5" viewBox="0 0 19.5 19.5"><rect x="1.2" y="1.2" width="17.1" height="17.1" fill="none" stroke="#3c3c3c" stroke-width="1.6"/></svg>
<svg class="r" style="left:1261.25px;top:510.55px;" width="19.5" height="19.5" viewBox="0 0 19.5 19.5"><rect x="1.2" y="1.2" width="17.1" height="17.1" fill="none" stroke="#3c3c3c" stroke-width="1.6"/></svg>
<svg class="r" style="left:1640.25px;top:510.55px;" width="19.5" height="19.5" viewBox="0 0 19.5 19.5"><rect x="1.2" y="1.2" width="17.1" height="17.1" fill="none" stroke="#3c3c3c" stroke-width="1.6"/></svg>
<div class="t" style="left:2034.00px;top:512.61px;font-size:17px;line-height:17px;color:#0a0a0a;font-weight:bold;-webkit-text-stroke:0.35px #0a0a0a;transform:scaleX(1.0199);">ТОВ &quot;Заплазький</div>
<div class="t" style="left:138.60px;top:541.11px;font-size:17px;line-height:17px;color:#0a0a0a;font-weight:bold;-webkit-text-stroke:0.35px #0a0a0a;transform:scaleX(1.1000);">6178</div>
<div class="t" style="left:187.30px;top:541.11px;font-size:17px;line-height:17px;color:#0a0a0a;font-weight:bold;-webkit-text-stroke:0.35px #0a0a0a;transform:scaleX(1.0231);">ЗАТ &quot; ММЦ-СТБ&quot;</div>
<svg class="r" style="left:1096.25px;top:539.05px;" width="19.5" height="19.5" viewBox="0 0 19.5 19.5"><rect x="1.2" y="1.2" width="17.1" height="17.1" fill="none" stroke="#3c3c3c" stroke-width="1.6"/></svg>
<svg class="r" style="left:1261.25px;top:539.05px;" width="19.5" height="19.5" viewBox="0 0 19.5 19.5"><rect x="1.2" y="1.2" width="17.1" height="17.1" fill="none" stroke="#3c3c3c" stroke-width="1.6"/></svg>
<svg class="r" style="left:1640.25px;top:539.05px;" width="19.5" height="19.5" viewBox="0 0 19.5 19.5"><rect x="1.2" y="1.2" width="17.1" height="17.1" fill="none" stroke="#3c3c3c" stroke-width="1.6"/></svg>
<div class="t" style="left:2034.00px;top:541.11px;font-size:17px;line-height:17px;color:#0a0a0a;font-weight:bold;-webkit-text-stroke:0.35px #0a0a0a;transform:scaleX(1.0231);">ЗАТ &quot; Міжднародний</div>
<div class="t" style="left:138.60px;top:569.61px;font-size:17px;line-height:17px;color:#0a0a0a;font-weight:bold;-webkit-text-stroke:0.35px #0a0a0a;transform:scaleX(1.1000);">6179</div>
<div class="t" style="left:187.30px;top:569.61px;font-size:17px;line-height:17px;color:#0a0a0a;font-weight:bold;-webkit-text-stroke:0.35px #0a0a0a;transform:scaleX(1.0324);">ЗАТ &quot;Молнія&quot;</div>
<svg class="r" style="left:1096.25px;top:567.55px;" width="19.5" height="19.5" viewBox="0 0 19.5 19.5"><rect x="1.2" y="1.2" width="17.1" height="17.1" fill="none" stroke="#3c3c3c" stroke-width="1.6"/></svg>
<svg class="r" style="left:1261.25px;top:567.55px;" width="19.5" height="19.5" viewBox="0 0 19.5 19.5"><rect x="1.2" y="1.2" width="17.1" height="17.1" fill="none" stroke="#3c3c3c" stroke-width="1.6"/></svg>
<svg class="r" style="left:1640.25px;top:567.55px;" width="19.5" height="19.5" viewBox="0 0 19.5 19.5"><rect x="1.2" y="1.2" width="17.1" height="17.1" fill="none" stroke="#3c3c3c" stroke-width="1.6"/></svg>
<div class="t" style="left:138.60px;top:598.11px;font-size:17px;line-height:17px;color:#0a0a0a;font-weight:bold;-webkit-text-stroke:0.35px #0a0a0a;transform:scaleX(1.1000);">6180</div>
<div class="t" style="left:187.30px;top:598.11px;font-size:17px;line-height:17px;color:#0a0a0a;font-weight:bold;-webkit-text-stroke:0.35px #0a0a0a;transform:scaleX(1.0256);">Зброй Валентина Іванівна</div>
<svg class="r" style="left:1096.25px;top:596.05px;" width="19.5" height="19.5" viewBox="0 0 19.5 19.5"><rect x="1.2" y="1.2" width="17.1" height="17.1" fill="none" stroke="#3c3c3c" stroke-width="1.6"/></svg>
<svg class="r" style="left:1261.25px;top:596.05px;" width="19.5" height="19.5" viewBox="0 0 19.5 19.5"><rect x="1.2" y="1.2" width="17.1" height="17.1" fill="none" stroke="#3c3c3c" stroke-width="1.6"/></svg>
<svg class="r" style="left:1640.25px;top:596.05px;" width="19.5" height="19.5" viewBox="0 0 19.5 19.5"><rect x="1.2" y="1.2" width="17.1" height="17.1" fill="none" stroke="#3c3c3c" stroke-width="1.6"/></svg>
<div class="t" style="left:2034.00px;top:598.11px;font-size:17px;line-height:17px;color:#0a0a0a;font-weight:bold;-webkit-text-stroke:0.35px #0a0a0a;transform:scaleX(1.0256);">Зброй Валентина</div>
<div class="t" style="left:76.20px;top:626.61px;font-size:17px;line-height:17px;color:#0a0a0a;font-weight:bold;-webkit-text-stroke:0.35px #0a0a0a;transform:scaleX(1.1000);">1341410807</div>
<div class="t" style="left:187.30px;top:626.61px;font-size:17px;line-height:17px;color:#0a0a0a;font-weight:bold;-webkit-text-stroke:0.35px #0a0a0a;transform:scaleX(1.0726);">ЗДО &quot;Казка&quot;</div>
<svg class="r" style="left:1096.25px;top:624.55px;" width="19.5" height="19.5" viewBox="0 0 19.5 19.5"><rect x="1.2" y="1.2" width="17.1" height="17.1" fill="none" stroke="#3c3c3c" stroke-width="1.6"/></svg>
<svg class="r" style="left:1261.25px;top:624.55px;" width="19.5" height="19.5" viewBox="0 0 19.5 19.5"><rect x="1.2" y="1.2" width="17.1" height="17.1" fill="none" stroke="#3c3c3c" stroke-width="1.6"/></svg>
<svg class="r" style="left:1640.25px;top:624.55px;" width="19.5" height="19.5" viewBox="0 0 19.5 19.5"><rect x="1.2" y="1.2" width="17.1" height="17.1" fill="none" stroke="#3c3c3c" stroke-width="1.6"/></svg>
<div class="t" style="left:2034.00px;top:626.61px;font-size:17px;line-height:17px;color:#0a0a0a;font-weight:bold;-webkit-text-stroke:0.35px #0a0a0a;transform:scaleX(1.0726);">ЗДО &quot;Казка&quot;</div>
<div class="t" style="left:76.20px;top:655.11px;font-size:17px;line-height:17px;color:#0a0a0a;font-weight:bold;-webkit-text-stroke:0.35px #0a0a0a;transform:scaleX(1.1000);">1341410756</div>
<div class="t" style="left:187.30px;top:655.11px;font-size:17px;line-height:17px;color:#0a0a0a;font-weight:bold;-webkit-text-stroke:0.35px #0a0a0a;transform:scaleX(1.0425);">ЗДО &quot;Перлинка&quot;</div>
<svg class="r" style="left:1096.25px;top:653.05px;" width="19.5" height="19.5" viewBox="0 0 19.5 19.5"><rect x="1.2" y="1.2" width="17.1" height="17.1" fill="none" stroke="#3c3c3c" stroke-width="1.6"/></svg>
<svg class="r" style="left:1261.25px;top:653.05px;" width="19.5" height="19.5" viewBox="0 0 19.5 19.5"><rect x="1.2" y="1.2" width="17.1" height="17.1" fill="none" stroke="#3c3c3c" stroke-width="1.6"/></svg>
<svg class="r" style="left:1640.25px;top:653.05px;" width="19.5" height="19.5" viewBox="0 0 19.5 19.5"><rect x="1.2" y="1.2" width="17.1" height="17.1" fill="none" stroke="#3c3c3c" stroke-width="1.6"/><path d="M3.8 9.8l4 4 7.8-8.6" fill="none" stroke="#3c3c3c" stroke-width="1.6"/></svg>
<div class="t" style="left:138.60px;top:683.61px;font-size:17px;line-height:17px;color:#0a0a0a;font-weight:bold;-webkit-text-stroke:0.35px #0a0a0a;transform:scaleX(1.1000);">7300</div>
<div class="t" style="left:187.30px;top:683.61px;font-size:17px;line-height:17px;color:#0a0a0a;font-weight:bold;-webkit-text-stroke:0.35px #0a0a0a;transform:scaleX(1.0068);">Здравник ООО</div>
<svg class="r" style="left:1096.25px;top:681.55px;" width="19.5" height="19.5" viewBox="0 0 19.5 19.5"><rect x="1.2" y="1.2" width="17.1" height="17.1" fill="none" stroke="#3c3c3c" stroke-width="1.6"/></svg>
<svg class="r" style="left:1261.25px;top:681.55px;" width="19.5" height="19.5" viewBox="0 0 19.5 19.5"><rect x="1.2" y="1.2" width="17.1" height="17.1" fill="none" stroke="#3c3c3c" stroke-width="1.6"/></svg>
<svg class="r" style="left:1640.25px;top:681.55px;" width="19.5" height="19.5" viewBox="0 0 19.5 19.5"><rect x="1.2" y="1.2" width="17.1" height="17.1" fill="none" stroke="#3c3c3c" stroke-width="1.6"/><path d="M3.8 9.8l4 4 7.8-8.6" fill="none" stroke="#3c3c3c" stroke-width="1.6"/></svg>
<div class="t" style="left:2034.00px;top:683.61px;font-size:17px;line-height:17px;color:#0a0a0a;font-weight:bold;-webkit-text-stroke:0.35px #0a0a0a;transform:scaleX(1.0068);">Здравник ООО</div>
<div class="t" style="left:138.60px;top:712.11px;font-size:17px;line-height:17px;color:#0a0a0a;font-weight:bold;-webkit-text-stroke:0.35px #0a0a0a;transform:scaleX(1.1000);">7301</div>
<div class="t" style="left:187.30px;top:712.11px;font-size:17px;line-height:17px;color:#0a0a0a;font-weight:bold;-webkit-text-stroke:0.35px #0a0a0a;transform:scaleX(1.0058);">Здраво ООО</div>
<svg class="r" style="left:1096.25px;top:710.05px;" width="19.5" height="19.5" viewBox="0 0 19.5 19.5"><rect x="1.2" y="1.2" width="17.1" height="17.1" fill="none" stroke="#3c3c3c" stroke-width="1.6"/></svg>
<svg class="r" style="left:1261.25px;top:710.05px;" width="19.5" height="19.5" viewBox="0 0 19.5 19.5"><rect x="1.2" y="1.2" width="17.1" height="17.1" fill="none" stroke="#3c3c3c" stroke-width="1.6"/></svg>
<svg class="r" style="left:1640.25px;top:710.05px;" width="19.5" height="19.5" viewBox="0 0 19.5 19.5"><rect x="1.2" y="1.2" width="17.1" height="17.1" fill="none" stroke="#3c3c3c" stroke-width="1.6"/><path d="M3.8 9.8l4 4 7.8-8.6" fill="none" stroke="#3c3c3c" stroke-width="1.6"/></svg>
<div class="t" style="left:2034.00px;top:712.11px;font-size:17px;line-height:17px;color:#0a0a0a;font-weight:bold;-webkit-text-stroke:0.35px #0a0a0a;transform:scaleX(1.0058);">Здраво ООО</div>
<div class="t" style="left:138.60px;top:740.61px;font-size:17px;line-height:17px;color:#0a0a0a;font-weight:bold;-webkit-text-stroke:0.35px #0a0a0a;transform:scaleX(1.1000);">7302</div>
<div class="t" style="left:187.30px;top:740.61px;font-size:17px;line-height:17px;color:#0a0a0a;font-weight:bold;-webkit-text-stroke:0.35px #0a0a0a;transform:scaleX(0.9784);">ЗДРАВОФАРМ ООО</div>
<svg class="r" style="left:1096.25px;top:738.55px;" width="19.5" height="19.5" viewBox="0 0 19.5 19.5"><rect x="1.2" y="1.2" width="17.1" height="17.1" fill="none" stroke="#3c3c3c" stroke-width="1.6"/></svg>
<svg class="r" style="left:1261.25px;top:738.55px;" width="19.5" height="19.5" viewBox="0 0 19.5 19.5"><rect x="1.2" y="1.2" width="17.1" height="17.1" fill="none" stroke="#3c3c3c" stroke-width="1.6"/></svg>
<svg class="r" style="left:1640.25px;top:738.55px;" width="19.5" height="19.5" viewBox="0 0 19.5 19.5"><rect x="1.2" y="1.2" width="17.1" height="17.1" fill="none" stroke="#3c3c3c" stroke-width="1.6"/><path d="M3.8 9.8l4 4 7.8-8.6" fill="none" stroke="#3c3c3c" stroke-width="1.6"/></svg>
<div class="t" style="left:2034.00px;top:740.61px;font-size:17px;line-height:17px;color:#0a0a0a;font-weight:bold;-webkit-text-stroke:0.35px #0a0a0a;transform:scaleX(0.9784);">ЗДРАВОФАРМ</div>
<div class="t" style="left:138.60px;top:769.11px;font-size:17px;line-height:17px;color:#0a0a0a;font-weight:bold;-webkit-text-stroke:0.35px #0a0a0a;transform:scaleX(1.1000);">6181</div>
<div class="t" style="left:187.30px;top:769.11px;font-size:17px;line-height:17px;color:#0a0a0a;font-weight:bold;-webkit-text-stroke:0.35px #0a0a0a;transform:scaleX(0.9440);">ЗЕОН ЧП</div>
<svg class="r" style="left:1096.25px;top:767.05px;" width="19.5" height="19.5" viewBox="0 0 19.5 19.5"><rect x="1.2" y="1.2" width="17.1" height="17.1" fill="none" stroke="#3c3c3c" stroke-width="1.6"/></svg>
<svg class="r" style="left:1261.25px;top:767.05px;" width="19.5" height="19.5" viewBox="0 0 19.5 19.5"><rect x="1.2" y="1.2" width="17.1" height="17.1" fill="none" stroke="#3c3c3c" stroke-width="1.6"/></svg>
<svg class="r" style="left:1640.25px;top:767.05px;" width="19.5" height="19.5" viewBox="0 0 19.5 19.5"><rect x="1.2" y="1.2" width="17.1" height="17.1" fill="none" stroke="#3c3c3c" stroke-width="1.6"/></svg>
<div class="t" style="left:2034.00px;top:769.11px;font-size:17px;line-height:17px;color:#0a0a0a;font-weight:bold;-webkit-text-stroke:0.35px #0a0a0a;transform:scaleX(0.9440);">ЗЕОН Частное</div>
<div class="t" style="left:138.60px;top:797.61px;font-size:17px;line-height:17px;color:#0a0a0a;font-weight:bold;-webkit-text-stroke:0.35px #0a0a0a;transform:scaleX(1.1000);">6182</div>
<div class="t" style="left:187.30px;top:797.61px;font-size:17px;line-height:17px;color:#0a0a0a;font-weight:bold;-webkit-text-stroke:0.35px #0a0a0a;transform:scaleX(1.0506);">Золотаренко Оксана Миколаївна</div>
<svg class="r" style="left:1096.25px;top:795.55px;" width="19.5" height="19.5" viewBox="0 0 19.5 19.5"><rect x="1.2" y="1.2" width="17.1" height="17.1" fill="none" stroke="#3c3c3c" stroke-width="1.6"/></svg>
<svg class="r" style="left:1261.25px;top:795.55px;" width="19.5" height="19.5" viewBox="0 0 19.5 19.5"><rect x="1.2" y="1.2" width="17.1" height="17.1" fill="none" stroke="#3c3c3c" stroke-width="1.6"/></svg>
<svg class="r" style="left:1640.25px;top:795.55px;" width="19.5" height="19.5" viewBox="0 0 19.5 19.5"><rect x="1.2" y="1.2" width="17.1" height="17.1" fill="none" stroke="#3c3c3c" stroke-width="1.6"/></svg>
<div class="t" style="left:2034.00px;top:797.61px;font-size:17px;line-height:17px;color:#0a0a0a;font-weight:bold;-webkit-text-stroke:0.35px #0a0a0a;transform:scaleX(1.0506);">Золотаренко</div>
<div class="t" style="left:138.60px;top:826.11px;font-size:17px;line-height:17px;color:#0a0a0a;font-weight:bold;-webkit-text-stroke:0.35px #0a0a0a;transform:scaleX(1.1000);">6183</div>
<div class="t" style="left:187.30px;top:826.11px;font-size:17px;line-height:17px;color:#0a0a0a;font-weight:bold;-webkit-text-stroke:0.35px #0a0a0a;transform:scaleX(1.0486);">Зорівська міська рада</div>
<svg class="r" style="left:1096.25px;top:824.05px;" width="19.5" height="19.5" viewBox="0 0 19.5 19.5"><rect x="1.2" y="1.2" width="17.1" height="17.1" fill="none" stroke="#3c3c3c" stroke-width="1.6"/></svg>
<svg class="r" style="left:1261.25px;top:824.05px;" width="19.5" height="19.5" viewBox="0 0 19.5 19.5"><rect x="1.2" y="1.2" width="17.1" height="17.1" fill="none" stroke="#3c3c3c" stroke-width="1.6"/></svg>
<svg class="r" style="left:1640.25px;top:824.05px;" width="19.5" height="19.5" viewBox="0 0 19.5 19.5"><rect x="1.2" y="1.2" width="17.1" height="17.1" fill="none" stroke="#3c3c3c" stroke-width="1.6"/></svg>
<div class="t" style="left:2034.00px;top:826.11px;font-size:17px;line-height:17px;color:#0a0a0a;font-weight:bold;-webkit-text-stroke:0.35px #0a0a0a;transform:scaleX(1.0486);">Зорівська міська</div>
<div class="t" style="left:138.60px;top:854.61px;font-size:17px;line-height:17px;color:#0a0a0a;font-weight:bold;-webkit-text-stroke:0.35px #0a0a0a;transform:scaleX(1.1000);">6184</div>
<div class="t" style="left:187.30px;top:854.61px;font-size:17px;line-height:17px;color:#0a0a0a;font-weight:bold;-webkit-text-stroke:0.35px #0a0a0a;transform:scaleX(1.0446);">Зотова Светлана Викторовна</div>
<svg class="r" style="left:1096.25px;top:852.55px;" width="19.5" height="19.5" viewBox="0 0 19.5 19.5"><rect x="1.2" y="1.2" width="17.1" height="17.1" fill="none" stroke="#3c3c3c" stroke-width="1.6"/></svg>
<svg class="r" style="left:1261.25px;top:852.55px;" width="19.5" height="19.5" viewBox="0 0 19.5 19.5"><rect x="1.2" y="1.2" width="17.1" height="17.1" fill="none" stroke="#3c3c3c" stroke-width="1.6"/></svg>
<svg class="r" style="left:1640.25px;top:852.55px;" width="19.5" height="19.5" viewBox="0 0 19.5 19.5"><rect x="1.2" y="1.2" width="17.1" height="17.1" fill="none" stroke="#3c3c3c" stroke-width="1.6"/></svg>
<div class="t" style="left:2034.00px;top:854.61px;font-size:17px;line-height:17px;color:#0a0a0a;font-weight:bold;-webkit-text-stroke:0.35px #0a0a0a;transform:scaleX(1.0446);">Зотова Светлана</div>
<div class="t" style="left:138.60px;top:883.11px;font-size:17px;line-height:17px;color:#0a0a0a;font-weight:bold;-webkit-text-stroke:0.35px #0a0a0a;transform:scaleX(1.1000);">6185</div>
<div class="t" style="left:187.30px;top:883.11px;font-size:17px;line-height:17px;color:#0a0a0a;font-weight:bold;-webkit-text-stroke:0.35px #0a0a0a;transform:scaleX(1.0119);">Иваниенко Андрей Владимирович</div>
<svg class="r" style="left:1096.25px;top:881.05px;" width="19.5" height="19.5" viewBox="0 0 19.5 19.5"><rect x="1.2" y="1.2" width="17.1" height="17.1" fill="none" stroke="#3c3c3c" stroke-width="1.6"/></svg>
<svg class="r" style="left:1261.25px;top:881.05px;" width="19.5" height="19.5" viewBox="0 0 19.5 19.5"><rect x="1.2" y="1.2" width="17.1" height="17.1" fill="none" stroke="#3c3c3c" stroke-width="1.6"/></svg>
<svg class="r" style="left:1640.25px;top:881.05px;" width="19.5" height="19.5" viewBox="0 0 19.5 19.5"><rect x="1.2" y="1.2" width="17.1" height="17.1" fill="none" stroke="#3c3c3c" stroke-width="1.6"/></svg>
<div class="t" style="left:2034.00px;top:883.11px;font-size:17px;line-height:17px;color:#0a0a0a;font-weight:bold;-webkit-text-stroke:0.35px #0a0a0a;transform:scaleX(1.0119);">Иваниенко Андрей</div>
<div class="t" style="left:138.60px;top:911.61px;font-size:17px;line-height:17px;color:#0a0a0a;font-weight:bold;-webkit-text-stroke:0.35px #0a0a0a;transform:scaleX(1.1000);">6186</div>
<div class="t" style="left:187.30px;top:911.61px;font-size:17px;line-height:17px;color:#0a0a0a;font-weight:bold;-webkit-text-stroke:0.35px #0a0a0a;transform:scaleX(1.0704);">Иванюк Наталья</div>
<svg class="r" style="left:1096.25px;top:909.55px;" width="19.5" height="19.5" viewBox="0 0 19.5 19.5"><rect x="1.2" y="1.2" width="17.1" height="17.1" fill="none" stroke="#3c3c3c" stroke-width="1.6"/></svg>
<svg class="r" style="left:1261.25px;top:909.55px;" width="19.5" height="19.5" viewBox="0 0 19.5 19.5"><rect x="1.2" y="1.2" width="17.1" height="17.1" fill="none" stroke="#3c3c3c" stroke-width="1.6"/></svg>
<svg class="r" style="left:1640.25px;top:909.55px;" width="19.5" height="19.5" viewBox="0 0 19.5 19.5"><rect x="1.2" y="1.2" width="17.1" height="17.1" fill="none" stroke="#3c3c3c" stroke-width="1.6"/></svg>
<div class="t" style="left:138.60px;top:940.11px;font-size:17px;line-height:17px;color:#0a0a0a;font-weight:bold;-webkit-text-stroke:0.35px #0a0a0a;transform:scaleX(1.1000);">6187</div>
<div class="t" style="left:187.30px;top:940.11px;font-size:17px;line-height:17px;color:#0a0a0a;font-weight:bold;-webkit-text-stroke:0.35px #0a0a0a;transform:scaleX(1.0356);">Иващенко Ирина</div>
<svg class="r" style="left:1096.25px;top:938.05px;" width="19.5" height="19.5" viewBox="0 0 19.5 19.5"><rect x="1.2" y="1.2" width="17.1" height="17.1" fill="none" stroke="#3c3c3c" stroke-width="1.6"/></svg>
<svg class="r" style="left:1261.25px;top:938.05px;" width="19.5" height="19.5" viewBox="0 0 19.5 19.5"><rect x="1.2" y="1.2" width="17.1" height="17.1" fill="none" stroke="#3c3c3c" stroke-width="1.6"/></svg>
<svg class="r" style="left:1640.25px;top:938.05px;" width="19.5" height="19.5" viewBox="0 0 19.5 19.5"><rect x="1.2" y="1.2" width="17.1" height="17.1" fill="none" stroke="#3c3c3c" stroke-width="1.6"/></svg>
<div class="t" style="left:138.60px;top:968.61px;font-size:17px;line-height:17px;color:#0a0a0a;font-weight:bold;-webkit-text-stroke:0.35px #0a0a0a;transform:scaleX(1.1000);">6188</div>
<div class="t" style="left:187.30px;top:968.61px;font-size:17px;line-height:17px;color:#0a0a0a;font-weight:bold;-webkit-text-stroke:0.35px #0a0a0a;transform:scaleX(1.0463);">ИДС</div>
<svg class="r" style="left:1096.25px;top:966.55px;" width="19.5" height="19.5" viewBox="0 0 19.5 19.5"><rect x="1.2" y="1.2" width="17.1" height="17.1" fill="none" stroke="#3c3c3c" stroke-width="1.6"/></svg>
<svg class="r" style="left:1261.25px;top:966.55px;" width="19.5" height="19.5" viewBox="0 0 19.5 19.5"><rect x="1.2" y="1.2" width="17.1" height="17.1" fill="none" stroke="#3c3c3c" stroke-width="1.6"/></svg>
<svg class="r" style="left:1640.25px;top:966.55px;" width="19.5" height="19.5" viewBox="0 0 19.5 19.5"><rect x="1.2" y="1.2" width="17.1" height="17.1" fill="none" stroke="#3c3c3c" stroke-width="1.6"/></svg>
<div class="t" style="left:107.40px;top:997.11px;font-size:17px;line-height:17px;color:#0a0a0a;font-weight:bold;-webkit-text-stroke:0.35px #0a0a0a;transform:scaleX(1.1000);">1206270</div>
<div class="t" style="left:187.30px;top:997.11px;font-size:17px;line-height:17px;color:#0a0a0a;font-weight:bold;-webkit-text-stroke:0.35px #0a0a0a;transform:scaleX(1.0543);">Институт Медицины акция</div>
<svg class="r" style="left:1096.25px;top:995.05px;" width="19.5" height="19.5" viewBox="0 0 19.5 19.5"><rect x="1.2" y="1.2" width="17.1" height="17.1" fill="none" stroke="#3c3c3c" stroke-width="1.6"/></svg>
<svg class="r" style="left:1261.25px;top:995.05px;" width="19.5" height="19.5" viewBox="0 0 19.5 19.5"><rect x="1.2" y="1.2" width="17.1" height="17.1" fill="none" stroke="#3c3c3c" stroke-width="1.6"/></svg>
<svg class="r" style="left:1640.25px;top:995.05px;" width="19.5" height="19.5" viewBox="0 0 19.5 19.5"><rect x="1.2" y="1.2" width="17.1" height="17.1" fill="none" stroke="#3c3c3c" stroke-width="1.6"/></svg>
<div class="t" style="left:1749.00px;top:997.11px;font-size:17px;line-height:17px;color:#0a0a0a;font-weight:bold;-webkit-text-stroke:0.35px #0a0a0a;transform:scaleX(1.0742);">Скидка для сотрудника</div>
<div class="t" style="left:138.60px;top:1025.61px;font-size:17px;line-height:17px;color:#0a0a0a;font-weight:bold;-webkit-text-stroke:0.35px #0a0a0a;transform:scaleX(1.1000);">7303</div>
<div class="t" style="left:187.30px;top:1025.61px;font-size:17px;line-height:17px;color:#0a0a0a;font-weight:bold;-webkit-text-stroke:0.35px #0a0a0a;">Инфузия ТД ООО</div>
<svg class="r" style="left:1096.25px;top:1023.55px;" width="19.5" height="19.5" viewBox="0 0 19.5 19.5"><rect x="1.2" y="1.2" width="17.1" height="17.1" fill="none" stroke="#3c3c3c" stroke-width="1.6"/></svg>
<svg class="r" style="left:1261.25px;top:1023.55px;" width="19.5" height="19.5" viewBox="0 0 19.5 19.5"><rect x="1.2" y="1.2" width="17.1" height="17.1" fill="none" stroke="#3c3c3c" stroke-width="1.6"/></svg>
<svg class="r" style="left:1640.25px;top:1023.55px;" width="19.5" height="19.5" viewBox="0 0 19.5 19.5"><rect x="1.2" y="1.2" width="17.1" height="17.1" fill="none" stroke="#3c3c3c" stroke-width="1.6"/></svg>
<div class="t" style="left:2034.00px;top:1025.61px;font-size:17px;line-height:17px;color:#0a0a0a;font-weight:bold;-webkit-text-stroke:0.35px #0a0a0a;">Инфузия ТД ООО</div>
<div class="t" style="left:138.60px;top:1054.11px;font-size:17px;line-height:17px;color:#0a0a0a;font-weight:bold;-webkit-text-stroke:0.35px #0a0a0a;transform:scaleX(1.1000);">7304</div>
<div class="t" style="left:187.30px;top:1054.11px;font-size:17px;line-height:17px;color:#0a0a0a;font-weight:bold;-webkit-text-stroke:0.35px #0a0a0a;transform:scaleX(0.9965);">ИП Космо</div>
<svg class="r" style="left:1096.25px;top:1052.05px;" width="19.5" height="19.5" viewBox="0 0 19.5 19.5"><rect x="1.2" y="1.2" width="17.1" height="17.1" fill="none" stroke="#3c3c3c" stroke-width="1.6"/></svg>
<svg class="r" style="left:1261.25px;top:1052.05px;" width="19.5" height="19.5" viewBox="0 0 19.5 19.5"><rect x="1.2" y="1.2" width="17.1" height="17.1" fill="none" stroke="#3c3c3c" stroke-width="1.6"/></svg>
<svg class="r" style="left:1640.25px;top:1052.05px;" width="19.5" height="19.5" viewBox="0 0 19.5 19.5"><rect x="1.2" y="1.2" width="17.1" height="17.1" fill="none" stroke="#3c3c3c" stroke-width="1.6"/><path d="M3.8 9.8l4 4 7.8-8.6" fill="none" stroke="#3c3c3c" stroke-width="1.6"/></svg>
<div class="t" style="left:2034.00px;top:1054.11px;font-size:17px;line-height:17px;color:#0a0a0a;font-weight:bold;-webkit-text-stroke:0.35px #0a0a0a;transform:scaleX(0.9965);">ИП Космо</div>
<div class="t" style="left:76.20px;top:1082.61px;font-size:17px;line-height:17px;color:#0a0a0a;font-weight:bold;-webkit-text-stroke:0.35px #0a0a0a;transform:scaleX(1.1000);">1341398855</div>
<div class="t" style="left:187.30px;top:1082.61px;font-size:17px;line-height:17px;color:#0a0a0a;font-weight:bold;-webkit-text-stroke:0.35px #0a0a0a;transform:scaleX(1.0338);">Ирида-Украина ООО</div>
<svg class="r" style="left:1096.25px;top:1080.55px;" width="19.5" height="19.5" viewBox="0 0 19.5 19.5"><rect x="1.2" y="1.2" width="17.1" height="17.1" fill="none" stroke="#3c3c3c" stroke-width="1.6"/></svg>
<svg class="r" style="left:1261.25px;top:1080.55px;" width="19.5" height="19.5" viewBox="0 0 19.5 19.5"><rect x="1.2" y="1.2" width="17.1" height="17.1" fill="none" stroke="#3c3c3c" stroke-width="1.6"/></svg>
<svg class="r" style="left:1640.25px;top:1080.55px;" width="19.5" height="19.5" viewBox="0 0 19.5 19.5"><rect x="1.2" y="1.2" width="17.1" height="17.1" fill="none" stroke="#3c3c3c" stroke-width="1.6"/><path d="M3.8 9.8l4 4 7.8-8.6" fill="none" stroke="#3c3c3c" stroke-width="1.6"/></svg>
<div class="t" style="left:138.60px;top:1111.11px;font-size:17px;line-height:17px;color:#0a0a0a;font-weight:bold;-webkit-text-stroke:0.35px #0a0a0a;transform:scaleX(1.1000);">7305</div>
<div class="t" style="left:187.30px;top:1111.11px;font-size:17px;line-height:17px;color:#0a0a0a;font-weight:bold;-webkit-text-stroke:0.35px #0a0a0a;transform:scaleX(0.9776);">Иридиум ООО</div>
<svg class="r" style="left:1096.25px;top:1109.05px;" width="19.5" height="19.5" viewBox="0 0 19.5 19.5"><rect x="1.2" y="1.2" width="17.1" height="17.1" fill="none" stroke="#3c3c3c" stroke-width="1.6"/></svg>
<svg class="r" style="left:1261.25px;top:1109.05px;" width="19.5" height="19.5" viewBox="0 0 19.5 19.5"><rect x="1.2" y="1.2" width="17.1" height="17.1" fill="none" stroke="#3c3c3c" stroke-width="1.6"/></svg>
<svg class="r" style="left:1640.25px;top:1109.05px;" width="19.5" height="19.5" viewBox="0 0 19.5 19.5"><rect x="1.2" y="1.2" width="17.1" height="17.1" fill="none" stroke="#3c3c3c" stroke-width="1.6"/><path d="M3.8 9.8l4 4 7.8-8.6" fill="none" stroke="#3c3c3c" stroke-width="1.6"/></svg>
<div class="t" style="left:2034.00px;top:1111.11px;font-size:17px;line-height:17px;color:#0a0a0a;font-weight:bold;-webkit-text-stroke:0.35px #0a0a0a;transform:scaleX(0.9776);">Иридиум ООО</div>
<div class="t" style="left:138.60px;top:1139.61px;font-size:17px;line-height:17px;color:#0a0a0a;font-weight:bold;-webkit-text-stroke:0.35px #0a0a0a;transform:scaleX(1.1000);">6189</div>
<div class="t" style="left:187.30px;top:1139.61px;font-size:17px;line-height:17px;color:#0a0a0a;font-weight:bold;-webkit-text-stroke:0.35px #0a0a0a;transform:scaleX(1.0401);">Ищенко Анастасия</div>
<svg class="r" style="left:1096.25px;top:1137.55px;" width="19.5" height="19.5" viewBox="0 0 19.5 19.5"><rect x="1.2" y="1.2" width="17.1" height="17.1" fill="none" stroke="#3c3c3c" stroke-width="1.6"/></svg>
<svg class="r" style="left:1261.25px;top:1137.55px;" width="19.5" height="19.5" viewBox="0 0 19.5 19.5"><rect x="1.2" y="1.2" width="17.1" height="17.1" fill="none" stroke="#3c3c3c" stroke-width="1.6"/></svg>
<svg class="r" style="left:1640.25px;top:1137.55px;" width="19.5" height="19.5" viewBox="0 0 19.5 19.5"><rect x="1.2" y="1.2" width="17.1" height="17.1" fill="none" stroke="#3c3c3c" stroke-width="1.6"/></svg>
<div class="t" style="left:2034.00px;top:1139.61px;font-size:17px;line-height:17px;color:#0a0a0a;font-weight:bold;-webkit-text-stroke:0.35px #0a0a0a;transform:scaleX(1.0401);">Ищенко Анастасия</div>
<div class="t" style="left:76.20px;top:1168.11px;font-size:17px;line-height:17px;color:#0a0a0a;font-weight:bold;-webkit-text-stroke:0.35px #0a0a0a;transform:scaleX(1.1000);">1341408696</div>
<div class="t" style="left:187.30px;top:1168.11px;font-size:17px;line-height:17px;color:#0a0a0a;font-weight:bold;-webkit-text-stroke:0.35px #0a0a0a;transform:scaleX(1.1252);">ІДУ НД ЦЗ</div>
<svg class="r" style="left:1096.25px;top:1166.05px;" width="19.5" height="19.5" viewBox="0 0 19.5 19.5"><rect x="1.2" y="1.2" width="17.1" height="17.1" fill="none" stroke="#3c3c3c" stroke-width="1.6"/></svg>
<svg class="r" style="left:1261.25px;top:1166.05px;" width="19.5" height="19.5" viewBox="0 0 19.5 19.5"><rect x="1.2" y="1.2" width="17.1" height="17.1" fill="none" stroke="#3c3c3c" stroke-width="1.6"/></svg>
<svg class="r" style="left:1640.25px;top:1166.05px;" width="19.5" height="19.5" viewBox="0 0 19.5 19.5"><rect x="1.2" y="1.2" width="17.1" height="17.1" fill="none" stroke="#3c3c3c" stroke-width="1.6"/></svg>
<div class="t" style="left:2034.00px;top:1168.11px;font-size:17px;line-height:17px;color:#0a0a0a;font-weight:bold;-webkit-text-stroke:0.35px #0a0a0a;transform:scaleX(1.1252);">Інститут державного</div>
<div class="t" style="left:77.23px;top:1196.61px;font-size:17px;line-height:17px;color:#0a0a0a;font-weight:bold;-webkit-text-stroke:0.35px #0a0a0a;transform:scaleX(1.1000);">1341195835</div>
<div class="t" style="left:187.30px;top:1196.61px;font-size:17px;line-height:17px;color:#0a0a0a;font-weight:bold;-webkit-text-stroke:0.35px #0a0a0a;transform:scaleX(0.9855);">Імперія СВ ТОВ</div>
<svg class="r" style="left:1096.25px;top:1194.55px;" width="19.5" height="19.5" viewBox="0 0 19.5 19.5"><rect x="1.2" y="1.2" width="17.1" height="17.1" fill="none" stroke="#3c3c3c" stroke-width="1.6"/></svg>
<svg class="r" style="left:1261.25px;top:1194.55px;" width="19.5" height="19.5" viewBox="0 0 19.5 19.5"><rect x="1.2" y="1.2" width="17.1" height="17.1" fill="none" stroke="#3c3c3c" stroke-width="1.6"/></svg>
<svg class="r" style="left:1640.25px;top:1194.55px;" width="19.5" height="19.5" viewBox="0 0 19.5 19.5"><rect x="1.2" y="1.2" width="17.1" height="17.1" fill="none" stroke="#3c3c3c" stroke-width="1.6"/><path d="M3.8 9.8l4 4 7.8-8.6" fill="none" stroke="#3c3c3c" stroke-width="1.6"/></svg>
<div class="r" style="left:2135.00px;top:197.00px;width:24.00px;height:1062.00px;background:#aaaaaa"></div>
<div class="r" style="left:2134.80px;top:197.00px;width:1.20px;height:54.00px;background:#bdbdbd"></div>
<svg class="r" style="left:2141.00px;top:205.00px;" width="12" height="10" viewBox="0 0 12 10"><path d="M1.3 8.7L6 4l4.7 4.7" fill="none" stroke="#454545" stroke-width="2.6"/></svg>
<svg class="r" style="left:2141.00px;top:1242.00px;" width="12" height="10" viewBox="0 0 12 10"><path d="M1.3 1.3L6 6l4.7-4.7" fill="none" stroke="#454545" stroke-width="2.6"/></svg>
<div class="r" style="left:2136.20px;top:610.00px;width:22.00px;height:23.60px;background:#939393"></div>
<div class="r" style="left:2135.00px;top:158.00px;width:24.00px;height:36.00px;background:#b3b3b3"></div>
<svg class="r" style="left:2144.00px;top:182.50px;" width="9.5" height="6" viewBox="0 0 9.5 6"><path d="M0.5 0.5h8.5L4.75 5.5z" fill="#111"/></svg>
<div class="r" style="left:0.00px;top:1220.00px;width:2135.00px;height:2.50px;background:#b4b4b4"></div>
<div class="r" style="left:16.35px;top:1219.00px;width:1.30px;height:5.00px;background:#7e7e7e"></div>
<div class="r" style="left:182.85px;top:1219.00px;width:1.30px;height:5.00px;background:#7e7e7e"></div>
<div class="r" style="left:721.35px;top:1219.00px;width:1.30px;height:5.00px;background:#7e7e7e"></div>
<div class="r" style="left:839.35px;top:1219.00px;width:1.30px;height:5.00px;background:#7e7e7e"></div>
<div class="r" style="left:1025.85px;top:1219.00px;width:1.30px;height:5.00px;background:#7e7e7e"></div>
<div class="r" style="left:1186.35px;top:1219.00px;width:1.30px;height:5.00px;background:#7e7e7e"></div>
<div class="r" style="left:1354.35px;top:1219.00px;width:1.30px;height:5.00px;background:#7e7e7e"></div>
<div class="r" style="left:1556.85px;top:1219.00px;width:1.30px;height:5.00px;background:#7e7e7e"></div>
<div class="r" style="left:1744.35px;top:1219.00px;width:1.30px;height:5.00px;background:#7e7e7e"></div>
<div class="r" style="left:2029.35px;top:1219.00px;width:1.30px;height:5.00px;background:#7e7e7e"></div>
<div class="r" style="left:0.00px;top:1222.00px;width:2135.00px;height:1.00px;background:#9a9a9a"></div>
<div class="r" style="left:0.00px;top:1223.50px;width:2135.00px;height:2.20px;background:#767676"></div>
<div class="r" style="left:0.00px;top:1225.70px;width:2135.00px;height:33.00px;background:#ababab"></div>
<div class="r" style="left:16.50px;top:1225.70px;width:1.20px;height:33.00px;background:#8c8c8c"></div>
<div class="r" style="left:186.00px;top:1229.00px;width:534.00px;height:26.50px;background:#b0b2b0;border:1px solid #a2a4a2;box-sizing:border-box"></div>
<div class="t" style="left:190.50px;top:1233.61px;font-size:17px;line-height:17px;color:#0a0a0a;font-weight:bold;-webkit-text-stroke:0.35px #0a0a0a;transform:scaleX(1.0361);">Запис 883 із 2252</div>
<div class="r" style="left:0.00px;top:1258.20px;width:2135.00px;height:1.30px;background:#7b7b7b"></div>
<div class="r" style="left:0.00px;top:1259.50px;width:2159.00px;height:92.00px;background:#ababab"></div>
<div class="r" style="left:25.50px;top:1261.50px;width:424.50px;height:21.50px;background:#969696"></div>
<svg class="r" style="left:6.00px;top:1265.00px;" width="10" height="14" viewBox="0 0 10 14"><path d="M8 1.5L3 7l5 5.5" fill="none" stroke="#454545" stroke-width="2.6"/></svg>
<svg class="r" style="left:2117.00px;top:1265.00px;" width="10" height="14" viewBox="0 0 10 14"><path d="M2 1.5L7 7l-5 5.5" fill="none" stroke="#454545" stroke-width="2.6"/></svg>
<div class="r" style="left:6.20px;top:1288.60px;width:19.00px;height:18.60px;border:1.5px solid #3a3a3a;box-sizing:border-box"></div>
<div class="t" style="left:29.20px;top:1290.03px;font-size:16.5px;line-height:16.5px;color:#2b2b35;letter-spacing:0.232px;">Показувати деталі</div>
<div class="r" style="left:4.80px;top:1313.60px;width:187.00px;height:33.40px;border:2px solid #141414;box-sizing:border-box;background:#b2b2b2"></div>
<div class="t" style="left:9.00px;top:1321.03px;font-size:16.5px;line-height:16.5px;color:#262626;letter-spacing:-0.115px;">Головна</div>
<div class="r" style="left:195.00px;top:1313.60px;width:187.00px;height:33.40px;border:2px solid #2a6cab;box-sizing:border-box;background:#b39679"></div>
<div class="t" style="left:199.00px;top:1321.03px;font-size:16.5px;line-height:16.5px;color:#262626;letter-spacing:-0.987px;">Фірми</div>
<div class="r" style="left:0.00px;top:1350.80px;width:2159.00px;height:1.20px;background:#9c9c9c"></div>
<div class="r" style="left:0.00px;top:1352.00px;width:2159.00px;height:28.00px;background:#ababab"></div>
<div class="r" style="left:297.00px;top:1354.00px;width:1.20px;height:26.00px;background:#9a9a9a"></div>
<div class="r" style="left:603.00px;top:1354.00px;width:1.20px;height:26.00px;background:#9a9a9a"></div>
<div class="r" style="left:661.70px;top:1354.00px;width:1.20px;height:26.00px;background:#9a9a9a"></div>
<div class="r" style="left:1117.80px;top:1354.00px;width:1.20px;height:26.00px;background:#9a9a9a"></div>
<svg class="r" style="left:4.00px;top:1356.50px;" width="19" height="22" viewBox="0 0 19 22"><path d="M1 3l4-2h12.5v17l-4 3.5H1z" fill="#6a78b8"/><path d="M1 3l4-2h12.5l-4 2.5z" fill="#9aa0c8"/><path d="M13.5 3.5h-12.5v17h12.5z" fill="#3f6fb0"/><path d="M1 6.5h12.5M1 9.8h12.5M1 13.1h12.5M1 16.4h12.5" stroke="#8fb4e0" stroke-width="1"/><path d="M13.5 3.5l4-2.5v17l-4 3.5z" fill="#54609a"/></svg>
<div class="t" style="left:30.50px;top:1358.56px;font-size:18px;line-height:18px;color:#262626;transform:scaleX(0.9104);">База даних: TASA3@TITAN</div>
<svg class="r" style="left:303.00px;top:1356.00px;" width="18" height="22" viewBox="0 0 18 22"><circle cx="6.5" cy="6.5" r="5.3" fill="#c02a10"/><circle cx="9.8" cy="8" r="4.6" fill="#7c82c0"/><path d="M7.5 10.5h5l-2.5 3z" fill="#d88a40"/><path d="M1.5 21.5q0-8 8.5-8.5q8 0.5 7.5 8.5z" fill="#7a80bc"/><path d="M6 17q4 2 8 0" stroke="#b0b4dc" stroke-width="1.4" fill="none"/></svg>
<div class="t" style="left:328.00px;top:1358.56px;font-size:18px;line-height:18px;color:#262626;transform:scaleX(0.8951);">Користувач: GIFT</div>
<svg class="r" style="left:606.50px;top:1355.50px;" width="21" height="23" viewBox="0 0 21 23"><path d="M1.5 9l3-4h14l1.5 4v15h-4l-3-6-3 6H1.5z" fill="#6a6eaa"/><path d="M4.5 5l2-1.5h6l1-2 1.5 3.5h3.5l1.5 4H1.5z" fill="#8a8ebe"/><path d="M3 21l2.5-7 2.5-0.5-2.5 8z" fill="#d8c040"/><path d="M11 22l2.5-6 2.5-0.5-2 7z" fill="#d8c040"/><path d="M12.5 0.5l3 4" stroke="#333" stroke-width="1"/></svg>
<div class="t" style="left:636.00px;top:1358.99px;font-size:17.5px;line-height:17.5px;color:#151515;">2</div>
<div class="t" style="left:667.00px;top:1358.56px;font-size:18px;line-height:18px;color:#262626;transform:scaleX(0.9166);">Кассовый аппарат не подключен</div>
<div class="t" style="left:1124.00px;top:1358.56px;font-size:18px;line-height:18px;color:#262626;transform:scaleX(0.8910);">Зона: Склад [1]</div>
<div class="r" style="left:722.80px;top:307.00px;width:1.30px;height:895.00px;background:#fff"></div>
<div class="r" style="left:722.80px;top:1201.00px;width:708.20px;height:1.00px;background:#fff"></div>
<div class="r" style="left:1429.80px;top:306.00px;width:1.20px;height:896.00px;background:#fff"></div>
<div class="r" style="left:724.00px;top:306.20px;width:706.00px;height:894.80px;background:#f0f0f0"></div>
<div class="r" style="left:724.00px;top:306.20px;width:706.00px;height:1.10px;background:#3a3a3a"></div>
<div class="r" style="left:724.00px;top:306.20px;width:1.10px;height:894.00px;background:#555"></div>
<div class="r" style="left:724.00px;top:1199.80px;width:705.70px;height:1.10px;background:#606060"></div>
<div class="r" style="left:1429.00px;top:306.20px;width:1.10px;height:38.50px;background:#3a3a3a"></div>
<div class="r" style="left:725.10px;top:307.30px;width:703.90px;height:37.90px;background:#fff"></div>
<div class="r" style="left:725.10px;top:345.20px;width:583.60px;height:104.30px;background:#fff"></div>
<div class="t" style="left:730.60px;top:317.46px;font-size:18px;line-height:18px;color:#000;letter-spacing:-0.209px;">Компанія (новий запис)</div>
<svg class="r" style="left:1396.50px;top:317.50px;" width="16" height="16" viewBox="0 0 16 16"><path d="M0.7 0.7L15.3 15.3M15.3 0.7L0.7 15.3" stroke="#111" stroke-width="1.3"/></svg>
<div class="r" style="left:1316.30px;top:359.00px;width:105.50px;height:33.00px;background:#e1e1e1;border:2.2px solid #0078d7;box-sizing:border-box"></div>
<div class="t" style="left:1354.60px;top:366.61px;font-size:17px;line-height:17px;color:#000;letter-spacing:-0.056px;">Так</div>
<div class="r" style="left:1316.30px;top:407.00px;width:105.50px;height:33.00px;background:#e1e1e1;border:1.2px solid #adadad;box-sizing:border-box"></div>
<div class="t" style="left:1327.50px;top:414.41px;font-size:17px;line-height:17px;color:#000;letter-spacing:-0.156px;">Скасувати</div>
<div class="r" style="left:724.20px;top:377.80px;width:584.50px;height:2.00px;background:#1e1e1e"></div>
<div class="r" style="left:724.20px;top:413.60px;width:584.50px;height:2.00px;background:#1e1e1e"></div>
<div class="r" style="left:732.80px;top:420.30px;width:97.00px;height:30.00px;background:#f0f0f0;border:2px solid #1e1e1e;border-bottom:none;box-sizing:border-box"></div>
<div class="r" style="left:724.20px;top:448.00px;width:9.00px;height:2.00px;background:#1e1e1e"></div>
<div class="r" style="left:829.50px;top:448.00px;width:479.20px;height:2.00px;background:#1e1e1e"></div>
<div class="r" style="left:824.00px;top:352.50px;width:1.00px;height:20.30px;background:#8c8c8c"></div>
<div class="r" style="left:985.00px;top:352.50px;width:1.00px;height:20.30px;background:#8c8c8c"></div>
<div class="r" style="left:1091.00px;top:352.50px;width:1.00px;height:20.30px;background:#8c8c8c"></div>
<div class="r" style="left:896.00px;top:389.50px;width:1.00px;height:18.50px;background:#8c8c8c"></div>
<div class="r" style="left:994.00px;top:389.50px;width:1.00px;height:18.50px;background:#8c8c8c"></div>
<div class="r" style="left:1090.00px;top:389.50px;width:1.00px;height:18.50px;background:#8c8c8c"></div>
<div class="r" style="left:1226.00px;top:389.50px;width:1.00px;height:18.50px;background:#8c8c8c"></div>
<div class="r" style="left:948.00px;top:424.80px;width:1.00px;height:19.40px;background:#8c8c8c"></div>
<div class="r" style="left:1076.00px;top:424.80px;width:1.00px;height:19.40px;background:#8c8c8c"></div>
<div class="r" style="left:1195.00px;top:424.80px;width:1.00px;height:19.40px;background:#8c8c8c"></div>
<div class="t" style="left:753.10px;top:356.21px;font-size:17px;line-height:17px;color:#111;letter-spacing:-0.408px;">Імпорт</div>
<div class="t" style="left:854.00px;top:356.21px;font-size:17px;line-height:17px;color:#111;letter-spacing:-0.330px;">Імпорт (Beta)</div>
<div class="t" style="left:1006.30px;top:356.21px;font-size:17px;line-height:17px;color:#111;letter-spacing:-0.449px;">Експорт</div>
<div class="t" style="left:1129.40px;top:356.21px;font-size:17px;line-height:17px;color:#111;letter-spacing:-0.605px;">Прайс-параметри</div>
<div class="t" style="left:761.70px;top:392.01px;font-size:17px;line-height:17px;color:#111;letter-spacing:-0.374px;">Прайс-зв&#x27;язки</div>
<div class="t" style="left:916.80px;top:392.01px;font-size:17px;line-height:17px;color:#111;letter-spacing:-0.252px;">Знижки</div>
<div class="t" style="left:1014.00px;top:392.01px;font-size:17px;line-height:17px;color:#111;letter-spacing:-0.241px;">Зв&#x27;язок</div>
<div class="t" style="left:1114.70px;top:392.01px;font-size:17px;line-height:17px;color:#111;letter-spacing:0.219px;">Додатково</div>
<div class="t" style="left:1244.00px;top:392.01px;font-size:17px;line-height:17px;color:#111;letter-spacing:-0.142px;">Дод.</div>
<div class="t" style="left:752.00px;top:428.01px;font-size:17px;line-height:17px;color:#111;letter-spacing:-0.418px;">Головні</div>
<div class="t" style="left:850.00px;top:428.01px;font-size:17px;line-height:17px;color:#111;letter-spacing:-0.183px;">Реквізити</div>
<div class="t" style="left:970.00px;top:428.01px;font-size:17px;line-height:17px;color:#111;letter-spacing:-0.660px;">Реєстрація</div>
<div class="t" style="left:1097.40px;top:428.01px;font-size:17px;line-height:17px;color:#111;letter-spacing:0.385px;">Контакти</div>
<div class="t" style="left:1217.00px;top:428.01px;font-size:17px;line-height:17px;color:#111;letter-spacing:-0.743px;">Ліцензія</div>
<div class="t" style="left:731.80px;top:465.41px;font-size:17px;line-height:17px;color:#141414;letter-spacing:-0.551px;">Назва:</div>
<svg class="r" style="left:812.00px;top:465.00px;" width="9" height="9" viewBox="0 0 9 9"><path d="M4.5 0.5v8M0.8 2.5l7.4 4M8.2 2.5l-7.4 4" stroke="#e87070" stroke-width="1.2"/></svg>
<div class="r" style="left:731.30px;top:483.30px;width:545.50px;height:31.00px;background:#fff;border:1.5px solid #7a7a7a;box-sizing:border-box"></div>
<div class="r" style="left:735.50px;top:489.50px;width:1.50px;height:18.50px;background:#000"></div>
<div class="t" style="left:732.60px;top:521.01px;font-size:17px;line-height:17px;color:#141414;letter-spacing:-0.397px;">Головне підприємство:</div>
<div class="r" style="left:731.30px;top:539.00px;width:545.50px;height:30.50px;background:#fff;border:1.5px solid #7a7a7a;box-sizing:border-box"></div>
<div class="r" style="left:1226.40px;top:542.30px;width:21.50px;height:24.00px;background:#e1e1e1;border:1.2px solid #b8b8b8;box-sizing:border-box"></div>
<div class="r" style="left:1231.50px;top:553.50px;width:2.00px;height:2.00px;background:#333"></div>
<div class="r" style="left:1236.30px;top:553.50px;width:2.00px;height:2.00px;background:#333"></div>
<div class="r" style="left:1241.00px;top:553.50px;width:2.00px;height:2.00px;background:#333"></div>
<div class="r" style="left:1252.00px;top:542.30px;width:21.70px;height:24.00px;background:#e1e1e1;border:1.2px solid #b8b8b8;box-sizing:border-box"></div>
<div class="t" style="left:1256.00px;top:547.11px;font-size:17px;line-height:17px;color:#111;">X</div>
<div class="r" style="left:731.30px;top:585.50px;width:545.50px;height:77.00px;border:1px solid #dddddd;box-sizing:border-box"></div>
<div class="r" style="left:747.50px;top:597.00px;width:19.50px;height:19.50px;background:#fff;border:1.5px solid #333;box-sizing:border-box"></div>
<div class="t" style="left:770.50px;top:598.21px;font-size:17px;line-height:17px;color:#141414;letter-spacing:-0.876px;">Філія</div>
<div class="r" style="left:852.70px;top:597.00px;width:19.50px;height:19.50px;background:#fff;border:1.5px solid #333;box-sizing:border-box"></div>
<div class="t" style="left:875.70px;top:598.21px;font-size:17px;line-height:17px;color:#141414;letter-spacing:-0.825px;">Постачальн</div>
<div class="r" style="left:993.60px;top:597.00px;width:19.50px;height:19.50px;background:#fff;border:1.5px solid #333;box-sizing:border-box"></div>
<div class="t" style="left:1016.60px;top:598.21px;font-size:17px;line-height:17px;color:#141414;letter-spacing:-0.459px;">Приватна осо</div>
<div class="r" style="left:1154.00px;top:597.00px;width:19.50px;height:19.50px;background:#fff;border:1.5px solid #333;box-sizing:border-box"></div>
<div class="t" style="left:1177.90px;top:598.21px;font-size:17px;line-height:17px;color:#141414;letter-spacing:-0.333px;">Дебітор</div>
<div class="r" style="left:747.50px;top:628.30px;width:19.50px;height:19.50px;background:#fff;border:1.5px solid #333;box-sizing:border-box"></div>
<div class="t" style="left:770.50px;top:630.21px;font-size:17px;line-height:17px;color:#141414;letter-spacing:-0.366px;">Страхова компанія</div>
<div class="r" style="left:993.60px;top:628.30px;width:19.50px;height:19.50px;background:#fff;border:1.5px solid #333;box-sizing:border-box"></div>
<div class="t" style="left:1016.40px;top:630.21px;font-size:17px;line-height:17px;color:#141414;letter-spacing:-0.147px;">Бюджетна організація</div>
<div class="t" style="left:731.00px;top:670.81px;font-size:17px;line-height:17px;color:#141414;letter-spacing:-0.254px;">Абревіатура:</div>
<div class="t" style="left:1018.00px;top:670.81px;font-size:17px;line-height:17px;color:#141414;letter-spacing:-0.208px;">Внутрішній штрих-код:</div>
<div class="r" style="left:731.30px;top:688.50px;width:259.00px;height:30.80px;background:#fff;border:1.5px solid #7a7a7a;box-sizing:border-box"></div>
<div class="r" style="left:1019.00px;top:688.50px;width:258.00px;height:30.80px;background:#fff;border:1.5px solid #7a7a7a;box-sizing:border-box"></div>
<div class="t" style="left:730.40px;top:725.11px;font-size:17px;line-height:17px;color:#141414;letter-spacing:-0.469px;">Цінові умови:</div>
<div class="r" style="left:731.30px;top:745.00px;width:546.00px;height:30.00px;background:#fff;border:1.5px solid #7a7a7a;box-sizing:border-box"></div>
<svg class="r" style="left:1257.00px;top:755.50px;" width="14" height="9" viewBox="0 0 14 9"><path d="M1.5 1.5l5.5 5.5 5.5-5.5" fill="none" stroke="#4a4a4a" stroke-width="1.5"/></svg>
<div class="t" style="left:733.40px;top:786.41px;font-size:17px;line-height:17px;color:#141414;letter-spacing:-0.198px;">Контракт за замовчуванням:</div>
<div class="r" style="left:731.30px;top:806.00px;width:547.00px;height:30.80px;background:#fff;border:1.5px solid #7a7a7a;box-sizing:border-box"></div>
<svg class="r" style="left:1258.00px;top:817.00px;" width="14" height="9" viewBox="0 0 14 9"><path d="M1.5 1.5l5.5 5.5 5.5-5.5" fill="none" stroke="#4a4a4a" stroke-width="1.5"/></svg>
<div class="t" style="left:734.00px;top:845.21px;font-size:17px;line-height:17px;color:#141414;letter-spacing:-0.113px;">Дата заснування (народження):</div>
<div class="r" style="left:731.30px;top:869.00px;width:259.00px;height:30.60px;background:#fff;border:1.5px solid #7a7a7a;box-sizing:border-box"></div>
<svg class="r" style="left:969.50px;top:880.00px;" width="14" height="9" viewBox="0 0 14 9"><path d="M1.5 1.5l5.5 5.5 5.5-5.5" fill="none" stroke="#4a4a4a" stroke-width="1.5"/></svg>
<div class="r" style="left:735.30px;top:906.40px;width:19.50px;height:19.50px;background:#f4f4f4;border:1.5px solid #cccccc;box-sizing:border-box"></div>
<div class="t" style="left:758.40px;top:907.51px;font-size:17px;line-height:17px;color:#a0a0a0;letter-spacing:-0.234px;">Неактивна</div>
<div class="r" style="left:735.30px;top:935.00px;width:19.50px;height:19.50px;background:#fff;border:1.5px solid #333;box-sizing:border-box"></div>
<div class="t" style="left:759.70px;top:936.51px;font-size:17px;line-height:17px;color:#141414;letter-spacing:-0.054px;">Дозволяти відпустку това</div>
<div class="r" style="left:735.30px;top:963.20px;width:19.50px;height:19.50px;background:#fff;border:1.5px solid #333;box-sizing:border-box"></div>
<div class="t" style="left:758.40px;top:964.41px;font-size:17px;line-height:17px;color:#141414;letter-spacing:-0.495px;">Не використовува</div>
<div class="t" style="left:736.80px;top:998.41px;font-size:17px;line-height:17px;color:#141414;letter-spacing:-0.579px;">Звірено:</div>
<div class="r" style="left:737.50px;top:1017.50px;width:539.00px;height:30.50px;background:#fff;border:1.5px solid #7a7a7a;box-sizing:border-box"></div>
<div class="r" style="left:1173.70px;top:1020.50px;width:74.30px;height:25.00px;background:#e1e1e1;border:1.2px solid #b8b8b8;box-sizing:border-box"></div>
<div class="t" style="left:1177.70px;top:1025.31px;font-size:17px;line-height:17px;color:#111;letter-spacing:-0.561px;">Сверить</div>
<div class="r" style="left:1251.60px;top:1020.50px;width:21.80px;height:25.00px;background:#e1e1e1;border:1.2px solid #b8b8b8;box-sizing:border-box"></div>
<div class="t" style="left:1255.60px;top:1025.31px;font-size:17px;line-height:17px;color:#111;">X</div>
<div class="t" style="left:731.80px;top:1076.31px;font-size:17px;line-height:17px;color:#141414;letter-spacing:-0.401px;">Примітка:</div>
<div class="r" style="left:732.80px;top:1094.00px;width:689.00px;height:30.30px;background:#fff;border:1.5px solid #7a7a7a;box-sizing:border-box"></div>
<div class="r" style="left:732.80px;top:1134.40px;width:689.00px;height:56.00px;border:1px solid #dcdcdc;box-sizing:border-box"></div>
<div class="r" style="left:740.00px;top:1127.00px;width:132.00px;height:12.00px;background:#f0f0f0"></div>
<div class="t" style="left:744.50px;top:1126.61px;font-size:17px;line-height:17px;color:#141414;letter-spacing:-0.386px;">Запис створено:</div>
<div class="t" style="left:744.50px;top:1155.91px;font-size:17px;line-height:17px;color:#141414;letter-spacing:-0.025px;">Автор:</div>
<div class="r" style="left:800.60px;top:1149.50px;width:164.00px;height:30.20px;background:#fff;border:1.5px solid #6a6a6a;box-sizing:border-box"></div>
<div class="t" style="left:804.00px;top:1156.76px;font-size:16px;line-height:16px;color:#111;letter-spacing:-0.946px;">GIFT</div>
<div class="t" style="left:975.20px;top:1155.91px;font-size:17px;line-height:17px;color:#141414;letter-spacing:0.358px;">Дата:</div>
<div class="r" style="left:1025.60px;top:1149.50px;width:188.00px;height:30.20px;background:#fff;border:1px solid #d6d6d6;box-sizing:border-box"></div>
<div class="t" style="left:1029.00px;top:1155.91px;font-size:17px;line-height:17px;color:#111;letter-spacing:-0.143px;">03.02.2025 12:49:06</div>
<svg class="r" style="left:0;top:0" width="2159" height="1380" viewBox="0 0 2159 1380"><path d="M1116.96 161.57 L799.80 407.40 L797.96 400.20 L789.20 419.80 L810.32 415.92 L803.76 412.43 L1117.64 162.43 Z" fill="#f00" stroke="#f00" stroke-width="0.4" stroke-linejoin="round"/></svg>
</body></html>
